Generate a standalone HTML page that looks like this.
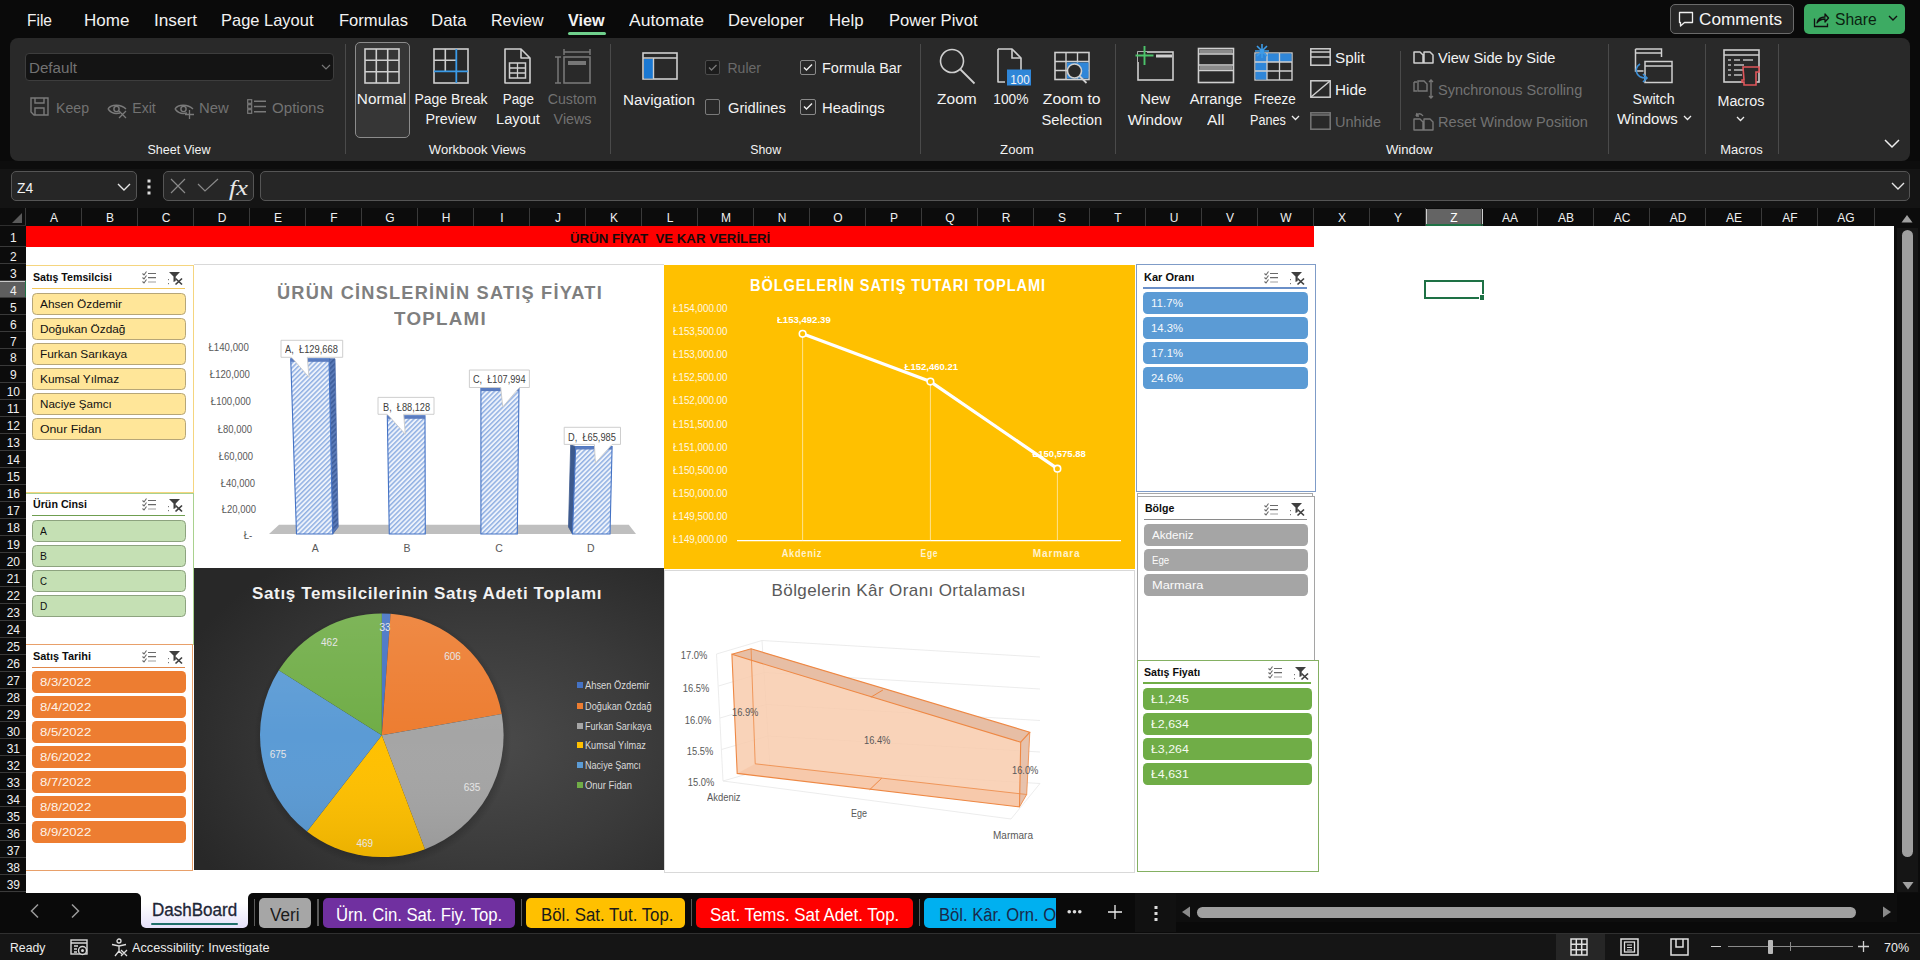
<!DOCTYPE html>
<html><head><meta charset="utf-8"><style>
html,body{margin:0;padding:0;}
body{width:1920px;height:960px;overflow:hidden;background:#0a0a0a;position:relative;font-family:"Liberation Sans", sans-serif;}
.t{position:absolute;white-space:pre;}
.r{position:absolute;}
svg.r{overflow:visible;}
</style></head><body>
<div class="t" style="left:27.00px;top:11.91px;font-size:17px;line-height:17px;color:#f2f2f2;transform:scaleX(0.9126);transform-origin:left;">File</div>
<div class="t" style="left:84.00px;top:11.91px;font-size:17px;line-height:17px;color:#f2f2f2;">Home</div>
<div class="t" style="left:154.00px;top:11.91px;font-size:17px;line-height:17px;color:#f2f2f2;transform:scaleX(1.0113);transform-origin:left;">Insert</div>
<div class="t" style="left:221.00px;top:11.91px;font-size:17px;line-height:17px;color:#f2f2f2;transform:scaleX(0.9689);transform-origin:left;">Page Layout</div>
<div class="t" style="left:338.50px;top:11.91px;font-size:17px;line-height:17px;color:#f2f2f2;transform:scaleX(0.9739);transform-origin:left;">Formulas</div>
<div class="t" style="left:431.00px;top:11.91px;font-size:17px;line-height:17px;color:#f2f2f2;transform:scaleX(0.9886);transform-origin:left;">Data</div>
<div class="t" style="left:491.00px;top:11.91px;font-size:17px;line-height:17px;color:#f2f2f2;transform:scaleX(0.9418);transform-origin:left;">Review</div>
<div class="t" style="left:568.00px;top:11.91px;font-size:17px;line-height:17px;color:#f2f2f2;font-weight:700;transform:scaleX(0.9497);transform-origin:left;">View</div>
<div class="t" style="left:628.50px;top:11.91px;font-size:17px;line-height:17px;color:#f2f2f2;transform:scaleX(1.0307);transform-origin:left;">Automate</div>
<div class="t" style="left:727.50px;top:11.91px;font-size:17px;line-height:17px;color:#f2f2f2;transform:scaleX(0.9807);transform-origin:left;">Developer</div>
<div class="t" style="left:828.50px;top:11.91px;font-size:17px;line-height:17px;color:#f2f2f2;transform:scaleX(0.9867);transform-origin:left;">Help</div>
<div class="t" style="left:888.50px;top:11.91px;font-size:17px;line-height:17px;color:#f2f2f2;transform:scaleX(0.9757);transform-origin:left;">Power Pivot</div>
<div class="r" style="left:568.00px;top:32.00px;width:38.00px;height:3.00px;background:#6fd08c;border-radius:1.5px;"></div>
<div class="r" style="left:1669.50px;top:4.00px;width:124.00px;height:30.00px;background:#262626;border:1px solid #6a6a6a;box-sizing:border-box;border-radius:5px;"></div>
<div class="t" style="left:1699.00px;top:11.41px;font-size:17px;line-height:17px;color:#f5f5f5;transform:scaleX(1.0099);transform-origin:left;">Comments</div>
<svg class="r" style="left:1678px;top:11px;" width="16" height="17" viewBox="0 0 16 17"><path d="M1.5 1.5h13v10h-8l-4 3.5v-3.5h-1z" fill="none" stroke="#eee" stroke-width="1.3" stroke-linejoin="round"/></svg>
<div class="r" style="left:1804.00px;top:4.00px;width:101.00px;height:30.00px;background:#3dab63;border-radius:5px;"></div>
<div class="t" style="left:1834.60px;top:11.41px;font-size:17px;line-height:17px;color:#0a1f10;transform:scaleX(0.9192);transform-origin:left;">Share</div>
<svg class="r" style="left:1813px;top:11px;" width="16" height="17" viewBox="0 0 16 17"><path d="M1.5 7.5v8h13v-3" fill="none" stroke="#111" stroke-width="1.3"/><path d="M4 12c1-4 4-6 8-6v-3l3.5 4-3.5 4v-3c-3 0-6 1-8 4z" fill="none" stroke="#111" stroke-width="1.3" stroke-linejoin="round"/></svg>
<svg class="r" style="left:1888px;top:14px;" width="10" height="8" viewBox="0 0 10 8"><path d="M1 2l4 4 4-4" fill="none" stroke="#111" stroke-width="1.4"/></svg>
<div class="r" style="left:10.00px;top:38.00px;width:1900.00px;height:122.50px;background:#292929;border-radius:8px;"></div>
<div class="r" style="left:344.50px;top:44.00px;width:1.00px;height:110.00px;background:#4a4a4a;"></div>
<div class="r" style="left:610.00px;top:44.00px;width:1.00px;height:110.00px;background:#4a4a4a;"></div>
<div class="r" style="left:920.00px;top:44.00px;width:1.00px;height:110.00px;background:#4a4a4a;"></div>
<div class="r" style="left:1115.00px;top:44.00px;width:1.00px;height:110.00px;background:#4a4a4a;"></div>
<div class="r" style="left:1607.50px;top:44.00px;width:1.00px;height:110.00px;background:#4a4a4a;"></div>
<div class="r" style="left:1704.50px;top:44.00px;width:1.00px;height:110.00px;background:#4a4a4a;"></div>
<div class="r" style="left:1777.50px;top:44.00px;width:1.00px;height:110.00px;background:#4a4a4a;"></div>
<div class="r" style="left:1400.00px;top:51.00px;width:1.00px;height:79.00px;background:#4a4a4a;"></div>
<div class="t" style="left:147.50px;top:143.62px;font-size:12.5px;line-height:12.5px;color:#f3f3f3;">Sheet View</div>
<div class="t" style="left:431.19px;top:143.62px;font-size:12.5px;line-height:12.5px;color:#f3f3f3;transform:scaleX(1.0472);transform-origin:center;">Workbook Views</div>
<div class="t" style="left:750.17px;top:143.62px;font-size:12.5px;line-height:12.5px;color:#f3f3f3;transform:scaleX(0.9850);transform-origin:center;">Show</div>
<div class="t" style="left:1000.63px;top:143.62px;font-size:12.5px;line-height:12.5px;color:#f3f3f3;transform:scaleX(1.0548);transform-origin:center;">Zoom</div>
<div class="t" style="left:1387.47px;top:143.62px;font-size:12.5px;line-height:12.5px;color:#f3f3f3;transform:scaleX(1.0505);transform-origin:center;">Window</div>
<div class="t" style="left:1720.51px;top:143.62px;font-size:12.5px;line-height:12.5px;color:#f3f3f3;transform:scaleX(1.0372);transform-origin:center;">Macros</div>
<div class="r" style="left:25.00px;top:53.00px;width:309.00px;height:28.00px;background:#141414;border:1px solid #3d3d3d;box-sizing:border-box;border-radius:4px;"></div>
<div class="t" style="left:28.60px;top:61.05px;font-size:14px;line-height:14px;color:#727272;transform:scaleX(1.0819);transform-origin:left;">Default</div>
<svg class="r" style="left:321px;top:64px;" width="10" height="6" viewBox="0 0 10 6"><path d="M1 1l4 4 4-4" fill="none" stroke="#777" stroke-width="1.2"/></svg>
<div class="t" style="left:55.50px;top:101.05px;font-size:14px;line-height:14px;color:#727272;transform:scaleX(1.0092);transform-origin:left;">Keep</div>
<div class="t" style="left:132.30px;top:101.05px;font-size:14px;line-height:14px;color:#727272;">Exit</div>
<div class="t" style="left:199.30px;top:101.05px;font-size:14px;line-height:14px;color:#727272;transform:scaleX(1.0603);transform-origin:left;">New</div>
<div class="t" style="left:272.00px;top:101.05px;font-size:14px;line-height:14px;color:#727272;transform:scaleX(1.0776);transform-origin:left;">Options</div>
<svg class="r" style="left:30px;top:97px;" width="19" height="19" viewBox="0 0 19 19"><path d="M1 1h17v17h-14l-3-3z" fill="none" stroke="#7a7a7a" stroke-width="1.4"/><path d="M5 1v5h9v-5M5 18v-7h9v7" fill="none" stroke="#7a7a7a" stroke-width="1.4"/></svg>
<svg class="r" style="left:107px;top:101px;" width="20" height="17" viewBox="0 0 20 17"><path d="M1 8c3-5 13-5 18 0M1 8c3 4 8 5 12 4" fill="none" stroke="#7a7a7a" stroke-width="1.4"/><circle cx="9.5" cy="8" r="2.6" fill="none" stroke="#7a7a7a" stroke-width="1.4"/><path d="M12 10l7 7M19 10l-7 7" stroke="#7a7a7a" stroke-width="1.3"/></svg>
<svg class="r" style="left:174px;top:101px;" width="20" height="17" viewBox="0 0 20 17"><path d="M1 8c3-5 13-5 18 0M1 8c3 4 8 5 12 4" fill="none" stroke="#7a7a7a" stroke-width="1.4"/><circle cx="9.5" cy="8" r="2.6" fill="none" stroke="#7a7a7a" stroke-width="1.4"/><path d="M15.5 9v9M11 13.5h9" stroke="#7a7a7a" stroke-width="1.3"/></svg>
<svg class="r" style="left:246.5px;top:99px;" width="19.5" height="15" viewBox="0 0 19.5 15"><rect x="0.7" y="0.7" width="4" height="3.6" fill="none" stroke="#7a7a7a" stroke-width="1.2"/><rect x="0.7" y="5.7" width="4" height="3.6" fill="none" stroke="#7a7a7a" stroke-width="1.2"/><rect x="0.7" y="10.7" width="4" height="3.6" fill="none" stroke="#7a7a7a" stroke-width="1.2"/><path d="M7 2.2h12M7 7.5h12M7 12.8h12" stroke="#7a7a7a" stroke-width="1.4"/></svg>
<div class="r" style="left:355.00px;top:42.00px;width:55.00px;height:96.00px;background:#363636;border:1px solid #8c8c8c;box-sizing:border-box;border-radius:5px;"></div>
<svg class="r" style="left:364px;top:48px;" width="36" height="36" viewBox="0 0 36 36"><rect x="1" y="1" width="34" height="34" fill="none" stroke="#cfcfcf" stroke-width="1.6"/><path d="M12.3 1v34M23.7 1v34M1 12.3h34M1 23.7h34" stroke="#cfcfcf" stroke-width="1.6"/></svg>
<svg class="r" style="left:433px;top:48px;" width="36" height="36" viewBox="0 0 36 36"><rect x="1" y="1" width="34" height="34" fill="none" stroke="#cfcfcf" stroke-width="1.6"/><path d="M12.3 1v22.7M1 12.3h22.7" stroke="#cfcfcf" stroke-width="1.6"/><path d="M23.3 1v34M1 23.3h34" stroke="#3b9be8" stroke-width="1.8"/></svg>
<svg class="r" style="left:504px;top:48px;" width="27" height="36" viewBox="0 0 27 36"><path d="M1 1h16l9 9v25h-25z M17 1v9h9" fill="none" stroke="#cfcfcf" stroke-width="1.6" stroke-linejoin="round"/><rect x="5.5" y="15" width="16" height="15" fill="none" stroke="#cfcfcf" stroke-width="1.5"/><path d="M13.5 15v15M5.5 20h16M5.5 25h16" stroke="#cfcfcf" stroke-width="1.3"/></svg>
<svg class="r" style="left:554px;top:47px;" width="38" height="37" viewBox="0 0 38 37"><path d="M10 2v6M36 2v6M10 5h26" stroke="#777" stroke-width="1.5"/><rect x="10" y="10" width="26" height="26" fill="none" stroke="#777" stroke-width="1.6"/><rect x="14" y="14" width="18" height="4" fill="#777"/><path d="M1 10h6M1 36h6M4 10v26" stroke="#777" stroke-width="1.5"/></svg>
<div class="t" style="left:359.14px;top:91.95px;font-size:14px;line-height:14px;color:#f3f3f3;transform:scaleX(1.0948);transform-origin:center;">Normal</div>
<div class="t" style="left:414.42px;top:91.95px;font-size:14px;line-height:14px;color:#f3f3f3;">Page Break</div>
<div class="t" style="left:425.70px;top:111.95px;font-size:14px;line-height:14px;color:#f3f3f3;transform:scaleX(1.0201);transform-origin:center;">Preview</div>
<div class="t" style="left:501.65px;top:91.95px;font-size:14px;line-height:14px;color:#f3f3f3;transform:scaleX(0.9572);transform-origin:center;">Page</div>
<div class="t" style="left:496.98px;top:111.95px;font-size:14px;line-height:14px;color:#f3f3f3;transform:scaleX(1.0419);transform-origin:center;">Layout</div>
<div class="t" style="left:548.48px;top:91.95px;font-size:14px;line-height:14px;color:#727272;transform:scaleX(1.0096);transform-origin:center;">Custom</div>
<div class="t" style="left:554.45px;top:111.95px;font-size:14px;line-height:14px;color:#727272;transform:scaleX(1.0217);transform-origin:center;">Views</div>
<svg class="r" style="left:642px;top:52px;" width="36" height="28" viewBox="0 0 36 28"><rect x="1" y="1" width="34" height="26" fill="none" stroke="#cfcfcf" stroke-width="1.6"/><path d="M1 6h34" stroke="#cfcfcf" stroke-width="1.6"/><rect x="2" y="7" width="9" height="19.5" fill="#1a78d2"/><path d="M11.5 6v21" stroke="#cfcfcf" stroke-width="1.4"/></svg>
<div class="t" style="left:625.92px;top:92.55px;font-size:14px;line-height:14px;color:#f3f3f3;transform:scaleX(1.0883);transform-origin:center;">Navigation</div>
<div class="r" style="left:705.00px;top:59.50px;width:15.00px;height:15.00px;background:#1c1c1c;border:1px solid #4a4a4a;box-sizing:border-box;border-radius:2px;"></div>
<svg class="r" style="left:705px;top:59.5px;" width="15" height="15.0" viewBox="0 0 15 15.0"><path d="M4 7.5l2.5 2.5 5-5" fill="none" stroke="#777" stroke-width="1.3"/></svg>
<div class="r" style="left:705.00px;top:99.00px;width:15.00px;height:15.50px;border:1px solid #7a7a7a;box-sizing:border-box;border-radius:2px;"></div>
<div class="r" style="left:800.00px;top:59.50px;width:16.00px;height:15.00px;border:1px solid #8a8a8a;box-sizing:border-box;border-radius:2px;"></div>
<svg class="r" style="left:800px;top:59.5px;" width="16" height="15.0" viewBox="0 0 16 15.0"><path d="M4 7.5l2.5 2.5 5.5-5.5" fill="none" stroke="#eee" stroke-width="1.4"/></svg>
<div class="r" style="left:800.00px;top:99.00px;width:16.00px;height:15.50px;border:1px solid #8a8a8a;box-sizing:border-box;border-radius:2px;"></div>
<svg class="r" style="left:800px;top:99px;" width="16" height="15.5" viewBox="0 0 16 15.5"><path d="M4 7.5l2.5 2.5 5.5-5.5" fill="none" stroke="#eee" stroke-width="1.4"/></svg>
<div class="t" style="left:727.50px;top:61.05px;font-size:14px;line-height:14px;color:#6a6a6a;">Ruler</div>
<div class="t" style="left:727.50px;top:101.05px;font-size:14px;line-height:14px;color:#f3f3f3;transform:scaleX(1.0462);transform-origin:left;">Gridlines</div>
<div class="t" style="left:822.00px;top:61.05px;font-size:14px;line-height:14px;color:#f3f3f3;transform:scaleX(1.0347);transform-origin:left;">Formula Bar</div>
<div class="t" style="left:822.00px;top:101.05px;font-size:14px;line-height:14px;color:#f3f3f3;transform:scaleX(1.0599);transform-origin:left;">Headings</div>
<svg class="r" style="left:938px;top:47px;" width="39" height="39" viewBox="0 0 39 39"><circle cx="14" cy="14" r="11.5" fill="none" stroke="#cfcfcf" stroke-width="1.6"/><path d="M22.5 22.5l14 14" stroke="#cfcfcf" stroke-width="1.8"/></svg>
<svg class="r" style="left:997px;top:48px;" width="35" height="38" viewBox="0 0 35 38"><path d="M1 1h14l9 9v14 M1 1v33h7" fill="none" stroke="#cfcfcf" stroke-width="1.6" stroke-linejoin="round"/><path d="M15 1v9h9" fill="none" stroke="#cfcfcf" stroke-width="1.6"/><rect x="10" y="21.5" width="24" height="16" fill="#2f86d8"/></svg>
<div class="t" style="left:1010.49px;top:73.74px;font-size:12px;line-height:12px;color:#f4f4f4;transform:scaleX(0.9740);transform-origin:center;">100</div>
<svg class="r" style="left:1054px;top:51px;" width="40" height="36" viewBox="0 0 40 36"><rect x="1" y="1.5" width="34" height="27" fill="none" stroke="#cfcfcf" stroke-width="1.6"/><path d="M12 1.5v27M23.5 1.5v27M1 10.5h34M1 19.5h34" stroke="#cfcfcf" stroke-width="1.4"/><rect x="13" y="11.5" width="21.5" height="16" fill="#2f86d8"/><circle cx="20.5" cy="20" r="7" fill="#2a2a2a" stroke="#cfcfcf" stroke-width="1.6"/><path d="M25.5 25l7 7" stroke="#cfcfcf" stroke-width="1.8"/></svg>
<div class="t" style="left:938.71px;top:92.35px;font-size:14px;line-height:14px;color:#f3f3f3;transform:scaleX(1.1065);transform-origin:center;">Zoom</div>
<div class="t" style="left:993.39px;top:92.35px;font-size:14px;line-height:14px;color:#f3f3f3;transform:scaleX(0.9830);transform-origin:center;">100%</div>
<div class="t" style="left:1046.02px;top:92.35px;font-size:14px;line-height:14px;color:#f3f3f3;transform:scaleX(1.1254);transform-origin:center;">Zoom to</div>
<div class="t" style="left:1042.70px;top:112.55px;font-size:14px;line-height:14px;color:#f3f3f3;transform:scaleX(1.0521);transform-origin:center;">Selection</div>
<svg class="r" style="left:1135px;top:45px;" width="39" height="36" viewBox="0 0 39 36"><rect x="3" y="7" width="35" height="28" fill="none" stroke="#cfcfcf" stroke-width="1.6"/><rect x="3" y="7" width="9" height="10" fill="#292929"/><path d="M21 11h16" stroke="#cfcfcf" stroke-width="3"/><path d="M9.5 1v19M0.5 10.5h18" stroke="#4cc36a" stroke-width="1.9"/></svg>
<svg class="r" style="left:1197px;top:47px;" width="38" height="37" viewBox="0 0 38 37"><rect x="1.5" y="1.5" width="35" height="34" fill="none" stroke="#cfcfcf" stroke-width="1.6"/><rect x="2.5" y="2.5" width="33" height="4" fill="#8a8a8a"/><path d="M1.5 7h35M1.5 18h35M1.5 23.5h35" stroke="#cfcfcf" stroke-width="1.6"/><rect x="2.5" y="19" width="33" height="4" fill="#8a8a8a"/></svg>
<svg class="r" style="left:1254px;top:44px;" width="40" height="37" viewBox="0 0 40 37"><rect x="1" y="9" width="37" height="27" fill="none" stroke="#cfcfcf" stroke-width="1.4"/><rect x="1.5" y="9.5" width="36" height="8.5" fill="#2f86d8"/><rect x="1.5" y="18" width="11.5" height="17.5" fill="#2f86d8"/><path d="M13 9v27M25.5 9v27M1 18h37M1 27h37" stroke="#cfcfcf" stroke-width="1.3"/><g stroke="#3b9be8" stroke-width="1.6"><path d="M8 0v14M1 7h14M3 2l10 10M13 2l-10 10"/></g></svg>
<div class="t" style="left:1141.00px;top:92.35px;font-size:14px;line-height:14px;color:#f3f3f3;transform:scaleX(1.0603);transform-origin:center;">New</div>
<div class="t" style="left:1129.70px;top:112.55px;font-size:14px;line-height:14px;color:#f3f3f3;transform:scaleX(1.0904);transform-origin:center;">Window</div>
<div class="t" style="left:1190.59px;top:92.35px;font-size:14px;line-height:14px;color:#f3f3f3;transform:scaleX(1.0540);transform-origin:center;">Arrange</div>
<div class="t" style="left:1208.02px;top:112.55px;font-size:14px;line-height:14px;color:#f3f3f3;transform:scaleX(1.1182);transform-origin:center;">All</div>
<div class="t" style="left:1252.81px;top:92.35px;font-size:14px;line-height:14px;color:#f3f3f3;transform:scaleX(0.9615);transform-origin:center;">Freeze</div>
<div class="t" style="left:1249.60px;top:112.55px;font-size:14px;line-height:14px;color:#f3f3f3;transform:scaleX(0.9018);transform-origin:left;">Panes</div>
<svg class="r" style="left:1290.5px;top:115px;" width="9.0" height="6" viewBox="0 0 9.0 6"><path d="M1 1l3.5 3.5 3.5-3.5" fill="none" stroke="#eee" stroke-width="1.3"/></svg>
<svg class="r" style="left:1310px;top:48px;" width="21" height="18" viewBox="0 0 21 18"><rect x="0.8" y="0.8" width="19.4" height="16.4" fill="none" stroke="#cfcfcf" stroke-width="1.5"/><path d="M1 4h19M1 9h19" stroke="#cfcfcf" stroke-width="1.5"/></svg>
<svg class="r" style="left:1310px;top:80px;" width="21" height="18" viewBox="0 0 21 18"><rect x="0.8" y="0.8" width="19.4" height="16.4" fill="none" stroke="#cfcfcf" stroke-width="1.5"/><path d="M1 17L20 1" stroke="#cfcfcf" stroke-width="1.5"/></svg>
<svg class="r" style="left:1310px;top:112px;" width="21" height="18" viewBox="0 0 21 18"><rect x="0.8" y="0.8" width="19.4" height="16.4" fill="none" stroke="#777" stroke-width="1.5"/><path d="M1 3h19" stroke="#777" stroke-width="1.5"/></svg>
<div class="t" style="left:1335.30px;top:51.05px;font-size:14px;line-height:14px;color:#f3f3f3;transform:scaleX(1.0904);transform-origin:left;">Split</div>
<div class="t" style="left:1335.30px;top:83.25px;font-size:14px;line-height:14px;color:#f3f3f3;transform:scaleX(1.0904);transform-origin:left;">Hide</div>
<div class="t" style="left:1335.30px;top:115.25px;font-size:14px;line-height:14px;color:#727272;transform:scaleX(1.0367);transform-origin:left;">Unhide</div>
<svg class="r" style="left:1413px;top:51px;" width="21" height="13" viewBox="0 0 21 13"><path d="M1 1h6l3 3v8h-9z M11 1h6l3 3v8h-9z" fill="none" stroke="#cfcfcf" stroke-width="1.5" stroke-linejoin="round"/></svg>
<svg class="r" style="left:1413px;top:78px;" width="21" height="22" viewBox="0 0 21 22"><path d="M1 4h3M1 4v9h3 M5 3h6l3 3v7h-9z" fill="none" stroke="#777" stroke-width="1.4"/><path d="M18 2v18M16 4l2-2 2 2M16 18l2 2 2-2" fill="none" stroke="#777" stroke-width="1.4"/></svg>
<svg class="r" style="left:1413px;top:111px;" width="21" height="20" viewBox="0 0 21 20"><path d="M1 8h6l3 3v8h-9z M11 8h6l3 3v8h-9z" fill="none" stroke="#777" stroke-width="1.4" stroke-linejoin="round"/><path d="M10 5c-2-3-5-3-7 0M3 5l1-3M3 5l3 0" fill="none" stroke="#777" stroke-width="1.3"/></svg>
<div class="t" style="left:1438.30px;top:51.05px;font-size:14px;line-height:14px;color:#f3f3f3;transform:scaleX(1.0435);transform-origin:left;">View Side by Side</div>
<div class="t" style="left:1438.30px;top:83.25px;font-size:14px;line-height:14px;color:#727272;transform:scaleX(1.0351);transform-origin:left;">Synchronous Scrolling</div>
<div class="t" style="left:1438.30px;top:115.25px;font-size:14px;line-height:14px;color:#727272;transform:scaleX(1.0419);transform-origin:left;">Reset Window Position</div>
<svg class="r" style="left:1634px;top:47px;" width="40" height="39" viewBox="0 0 40 39"><path d="M1.5 2h26v8M1.5 2v22h8M1.5 6h26" fill="none" stroke="#cfcfcf" stroke-width="1.5"/><rect x="11" y="14.5" width="27" height="21" fill="#292929" stroke="#cfcfcf" stroke-width="1.5"/><path d="M11 19h27" stroke="#cfcfcf" stroke-width="1.5"/><path d="M6 17c-6 4-5 14 6 14M9 27l4 4-4 4" fill="none" stroke="#3d8fd6" stroke-width="1.6"/></svg>
<div class="t" style="left:1633.38px;top:92.15px;font-size:14px;line-height:14px;color:#f3f3f3;transform:scaleX(1.0185);transform-origin:center;">Switch</div>
<div class="t" style="left:1617.20px;top:111.55px;font-size:14px;line-height:14px;color:#f3f3f3;transform:scaleX(1.0687);transform-origin:left;">Windows</div>
<svg class="r" style="left:1683px;top:115px;" width="9" height="6" viewBox="0 0 9 6"><path d="M1 1l3.5 3.5 3.5-3.5" fill="none" stroke="#eee" stroke-width="1.3"/></svg>
<svg class="r" style="left:1723px;top:49px;" width="40" height="38" viewBox="0 0 40 38"><rect x="1" y="1" width="35" height="32" fill="none" stroke="#cfcfcf" stroke-width="1.6"/><path d="M1 6h35" stroke="#cfcfcf" stroke-width="1.6"/><path d="M5 11h3M11 11h6M20 11h10M5 16h3M11 16h10M5 21h3M11 21h9M5 26h3M11 26h8" stroke="#bdbdbd" stroke-width="1.5"/><path d="M20 18h16v5h-3v13h-12v-3h-2v-2h2z" fill="#292929" stroke="#e0555a" stroke-width="1.6"/></svg>
<div class="t" style="left:1718.05px;top:93.95px;font-size:14px;line-height:14px;color:#f3f3f3;transform:scaleX(1.0218);transform-origin:center;">Macros</div>
<svg class="r" style="left:1736px;top:116px;" width="9" height="6" viewBox="0 0 9 6"><path d="M1 1l3.5 3.5 3.5-3.5" fill="none" stroke="#eee" stroke-width="1.3"/></svg>
<svg class="r" style="left:1884px;top:139px;" width="16" height="9" viewBox="0 0 16 9"><path d="M1 1l7 7 7-7" fill="none" stroke="#eee" stroke-width="1.5"/></svg>
<div class="r" style="left:0.00px;top:161.00px;width:1920.00px;height:8.00px;background:#0d0d0d;"></div>
<div class="r" style="left:0.00px;top:169.00px;width:1920.00px;height:39.00px;background:#141414;"></div>
<div class="r" style="left:10.50px;top:171.00px;width:126.50px;height:30.00px;background:#262626;border:1px solid #555555;box-sizing:border-box;border-radius:5px;"></div>
<div class="t" style="left:16.90px;top:179.50px;font-size:15px;line-height:15px;color:#f2f2f2;transform:scaleX(0.9255);transform-origin:left;">Z4</div>
<svg class="r" style="left:117px;top:183px;" width="14" height="8" viewBox="0 0 14 8"><path d="M1 1l6 6 6-6" fill="none" stroke="#e6e6e6" stroke-width="1.4"/></svg>
<svg class="r" style="left:147px;top:179px;" width="5" height="16" viewBox="0 0 5 16"><rect x="0.5" y="0.5" width="3" height="3" fill="#ddd"/><rect x="0.5" y="6.5" width="3" height="3" fill="#ddd"/><rect x="0.5" y="12.5" width="3" height="3" fill="#ddd"/></svg>
<div class="r" style="left:162.50px;top:171.00px;width:91.00px;height:30.00px;background:#262626;border:1px solid #555555;box-sizing:border-box;border-radius:5px;"></div>
<svg class="r" style="left:170px;top:178px;" width="16" height="16" viewBox="0 0 16 16"><path d="M1 1l14 14M15 1l-14 14" stroke="#8a8a8a" stroke-width="1.2"/></svg>
<svg class="r" style="left:197px;top:178px;" width="22" height="14" viewBox="0 0 22 14"><path d="M1 6l7 7 13-12" fill="none" stroke="#8a8a8a" stroke-width="1.2"/></svg>
<div class="t" style="left:228.50px;top:177.75px;font-size:20px;line-height:20px;color:#e8e8e8;font-family:'Liberation Serif', serif;transform:scaleX(1.3164);transform-origin:left;font-style:italic;">fx</div>
<div class="r" style="left:259.50px;top:171.00px;width:1650.50px;height:30.00px;background:#262626;border:1px solid #555555;box-sizing:border-box;border-radius:5px;"></div>
<svg class="r" style="left:1891px;top:182px;" width="14" height="8" viewBox="0 0 14 8"><path d="M1 1l6 6 6-6" fill="none" stroke="#e6e6e6" stroke-width="1.4"/></svg>
<div class="r" style="left:0.00px;top:208.00px;width:1920.00px;height:18.00px;background:#0c0c0c;"></div>
<svg class="r" style="left:12px;top:212px;" width="11" height="11" viewBox="0 0 11 11"><path d="M10 1v10h-10z" fill="#5a5a5a"/></svg>
<div class="r" style="left:25.00px;top:208.00px;width:1.00px;height:18.00px;background:#3a3a3a;"></div>
<div class="t" style="left:50.00px;top:211.84px;font-size:12px;line-height:12px;color:#f0f0f0;">A</div>
<div class="r" style="left:81.00px;top:208.00px;width:1.00px;height:18.00px;background:#3a3a3a;"></div>
<div class="t" style="left:106.00px;top:211.84px;font-size:12px;line-height:12px;color:#f0f0f0;">B</div>
<div class="r" style="left:137.00px;top:208.00px;width:1.00px;height:18.00px;background:#3a3a3a;"></div>
<div class="t" style="left:161.67px;top:211.84px;font-size:12px;line-height:12px;color:#f0f0f0;">C</div>
<div class="r" style="left:193.00px;top:208.00px;width:1.00px;height:18.00px;background:#3a3a3a;"></div>
<div class="t" style="left:217.67px;top:211.84px;font-size:12px;line-height:12px;color:#f0f0f0;">D</div>
<div class="r" style="left:249.00px;top:208.00px;width:1.00px;height:18.00px;background:#3a3a3a;"></div>
<div class="t" style="left:274.00px;top:211.84px;font-size:12px;line-height:12px;color:#f0f0f0;">E</div>
<div class="r" style="left:305.00px;top:208.00px;width:1.00px;height:18.00px;background:#3a3a3a;"></div>
<div class="t" style="left:330.33px;top:211.84px;font-size:12px;line-height:12px;color:#f0f0f0;">F</div>
<div class="r" style="left:361.00px;top:208.00px;width:1.00px;height:18.00px;background:#3a3a3a;"></div>
<div class="t" style="left:385.33px;top:211.84px;font-size:12px;line-height:12px;color:#f0f0f0;">G</div>
<div class="r" style="left:417.00px;top:208.00px;width:1.00px;height:18.00px;background:#3a3a3a;"></div>
<div class="t" style="left:441.67px;top:211.84px;font-size:12px;line-height:12px;color:#f0f0f0;">H</div>
<div class="r" style="left:473.00px;top:208.00px;width:1.00px;height:18.00px;background:#3a3a3a;"></div>
<div class="t" style="left:500.33px;top:211.84px;font-size:12px;line-height:12px;color:#f0f0f0;">I</div>
<div class="r" style="left:529.00px;top:208.00px;width:1.00px;height:18.00px;background:#3a3a3a;"></div>
<div class="t" style="left:555.00px;top:211.84px;font-size:12px;line-height:12px;color:#f0f0f0;">J</div>
<div class="r" style="left:585.00px;top:208.00px;width:1.00px;height:18.00px;background:#3a3a3a;"></div>
<div class="t" style="left:610.00px;top:211.84px;font-size:12px;line-height:12px;color:#f0f0f0;">K</div>
<div class="r" style="left:641.00px;top:208.00px;width:1.00px;height:18.00px;background:#3a3a3a;"></div>
<div class="t" style="left:666.66px;top:211.84px;font-size:12px;line-height:12px;color:#f0f0f0;">L</div>
<div class="r" style="left:697.00px;top:208.00px;width:1.00px;height:18.00px;background:#3a3a3a;"></div>
<div class="t" style="left:721.00px;top:211.84px;font-size:12px;line-height:12px;color:#f0f0f0;">M</div>
<div class="r" style="left:753.00px;top:208.00px;width:1.00px;height:18.00px;background:#3a3a3a;"></div>
<div class="t" style="left:777.67px;top:211.84px;font-size:12px;line-height:12px;color:#f0f0f0;">N</div>
<div class="r" style="left:809.00px;top:208.00px;width:1.00px;height:18.00px;background:#3a3a3a;"></div>
<div class="t" style="left:833.33px;top:211.84px;font-size:12px;line-height:12px;color:#f0f0f0;">O</div>
<div class="r" style="left:865.00px;top:208.00px;width:1.00px;height:18.00px;background:#3a3a3a;"></div>
<div class="t" style="left:890.00px;top:211.84px;font-size:12px;line-height:12px;color:#f0f0f0;">P</div>
<div class="r" style="left:921.00px;top:208.00px;width:1.00px;height:18.00px;background:#3a3a3a;"></div>
<div class="t" style="left:945.33px;top:211.84px;font-size:12px;line-height:12px;color:#f0f0f0;">Q</div>
<div class="r" style="left:977.00px;top:208.00px;width:1.00px;height:18.00px;background:#3a3a3a;"></div>
<div class="t" style="left:1001.67px;top:211.84px;font-size:12px;line-height:12px;color:#f0f0f0;">R</div>
<div class="r" style="left:1033.00px;top:208.00px;width:1.00px;height:18.00px;background:#3a3a3a;"></div>
<div class="t" style="left:1058.00px;top:211.84px;font-size:12px;line-height:12px;color:#f0f0f0;">S</div>
<div class="r" style="left:1089.00px;top:208.00px;width:1.00px;height:18.00px;background:#3a3a3a;"></div>
<div class="t" style="left:1114.33px;top:211.84px;font-size:12px;line-height:12px;color:#f0f0f0;">T</div>
<div class="r" style="left:1145.00px;top:208.00px;width:1.00px;height:18.00px;background:#3a3a3a;"></div>
<div class="t" style="left:1169.67px;top:211.84px;font-size:12px;line-height:12px;color:#f0f0f0;">U</div>
<div class="r" style="left:1201.00px;top:208.00px;width:1.00px;height:18.00px;background:#3a3a3a;"></div>
<div class="t" style="left:1226.00px;top:211.84px;font-size:12px;line-height:12px;color:#f0f0f0;">V</div>
<div class="r" style="left:1257.00px;top:208.00px;width:1.00px;height:18.00px;background:#3a3a3a;"></div>
<div class="t" style="left:1280.34px;top:211.84px;font-size:12px;line-height:12px;color:#f0f0f0;">W</div>
<div class="r" style="left:1313.00px;top:208.00px;width:1.00px;height:18.00px;background:#3a3a3a;"></div>
<div class="t" style="left:1338.00px;top:211.84px;font-size:12px;line-height:12px;color:#f0f0f0;">X</div>
<div class="r" style="left:1369.00px;top:208.00px;width:1.00px;height:18.00px;background:#3a3a3a;"></div>
<div class="t" style="left:1394.00px;top:211.84px;font-size:12px;line-height:12px;color:#f0f0f0;">Y</div>
<div class="r" style="left:1425.00px;top:208.00px;width:1.00px;height:18.00px;background:#3a3a3a;"></div>
<div class="r" style="left:1425.50px;top:209.00px;width:57.00px;height:17.00px;background:#646464;border-left:1px solid #cfcfcf;border-right:1px solid #cfcfcf;box-sizing:border-box;"></div>
<div class="r" style="left:1425.50px;top:224.00px;width:57.00px;height:2.00px;background:#1f7246;"></div>
<div class="t" style="left:1450.33px;top:211.84px;font-size:12px;line-height:12px;color:#ffffff;">Z</div>
<div class="r" style="left:1481.00px;top:208.00px;width:1.00px;height:18.00px;background:#3a3a3a;"></div>
<div class="t" style="left:1502.00px;top:211.84px;font-size:12px;line-height:12px;color:#f0f0f0;">AA</div>
<div class="r" style="left:1537.00px;top:208.00px;width:1.00px;height:18.00px;background:#3a3a3a;"></div>
<div class="t" style="left:1558.00px;top:211.84px;font-size:12px;line-height:12px;color:#f0f0f0;">AB</div>
<div class="r" style="left:1593.00px;top:208.00px;width:1.00px;height:18.00px;background:#3a3a3a;"></div>
<div class="t" style="left:1613.67px;top:211.84px;font-size:12px;line-height:12px;color:#f0f0f0;">AC</div>
<div class="r" style="left:1649.00px;top:208.00px;width:1.00px;height:18.00px;background:#3a3a3a;"></div>
<div class="t" style="left:1669.67px;top:211.84px;font-size:12px;line-height:12px;color:#f0f0f0;">AD</div>
<div class="r" style="left:1705.00px;top:208.00px;width:1.00px;height:18.00px;background:#3a3a3a;"></div>
<div class="t" style="left:1726.00px;top:211.84px;font-size:12px;line-height:12px;color:#f0f0f0;">AE</div>
<div class="r" style="left:1761.00px;top:208.00px;width:1.00px;height:18.00px;background:#3a3a3a;"></div>
<div class="t" style="left:1782.33px;top:211.84px;font-size:12px;line-height:12px;color:#f0f0f0;">AF</div>
<div class="r" style="left:1817.00px;top:208.00px;width:1.00px;height:18.00px;background:#3a3a3a;"></div>
<div class="t" style="left:1837.33px;top:211.84px;font-size:12px;line-height:12px;color:#f0f0f0;">AG</div>
<div class="r" style="left:1873.50px;top:208.00px;width:1.00px;height:18.00px;background:#3a3a3a;"></div>
<div class="r" style="left:0.00px;top:225.00px;width:26.00px;height:1.00px;background:#2e2e2e;"></div>
<div class="r" style="left:0.00px;top:226.00px;width:26.00px;height:667.00px;background:#0c0c0c;"></div>
<div class="r" style="left:0.00px;top:246.30px;width:26.00px;height:1.00px;background:#3a3a3a;"></div>
<div class="t" style="left:9.96px;top:232.49px;font-size:12px;line-height:12px;color:#f0f0f0;">1</div>
<div class="r" style="left:0.00px;top:263.30px;width:26.00px;height:1.00px;background:#3a3a3a;"></div>
<div class="t" style="left:9.96px;top:250.64px;font-size:12px;line-height:12px;color:#f0f0f0;">2</div>
<div class="r" style="left:0.00px;top:280.27px;width:26.00px;height:1.00px;background:#3a3a3a;"></div>
<div class="t" style="left:9.96px;top:267.62px;font-size:12px;line-height:12px;color:#f0f0f0;">3</div>
<div class="r" style="left:0.00px;top:280.77px;width:26.00px;height:16.97px;background:#5e5e5e;border-top:1px solid #c8c8c8;border-bottom:1px solid #c8c8c8;box-sizing:border-box;"></div>
<div class="r" style="left:24.50px;top:280.77px;width:1.50px;height:16.97px;background:#1f7246;"></div>
<div class="r" style="left:0.00px;top:297.24px;width:26.00px;height:1.00px;background:#3a3a3a;"></div>
<div class="t" style="left:9.96px;top:284.59px;font-size:12px;line-height:12px;color:#f0f0f0;">4</div>
<div class="r" style="left:0.00px;top:314.21px;width:26.00px;height:1.00px;background:#3a3a3a;"></div>
<div class="t" style="left:9.96px;top:301.56px;font-size:12px;line-height:12px;color:#f0f0f0;">5</div>
<div class="r" style="left:0.00px;top:331.18px;width:26.00px;height:1.00px;background:#3a3a3a;"></div>
<div class="t" style="left:9.96px;top:318.53px;font-size:12px;line-height:12px;color:#f0f0f0;">6</div>
<div class="r" style="left:0.00px;top:348.15px;width:26.00px;height:1.00px;background:#3a3a3a;"></div>
<div class="t" style="left:9.96px;top:335.50px;font-size:12px;line-height:12px;color:#f0f0f0;">7</div>
<div class="r" style="left:0.00px;top:365.12px;width:26.00px;height:1.00px;background:#3a3a3a;"></div>
<div class="t" style="left:9.96px;top:352.47px;font-size:12px;line-height:12px;color:#f0f0f0;">8</div>
<div class="r" style="left:0.00px;top:382.09px;width:26.00px;height:1.00px;background:#3a3a3a;"></div>
<div class="t" style="left:9.96px;top:369.44px;font-size:12px;line-height:12px;color:#f0f0f0;">9</div>
<div class="r" style="left:0.00px;top:399.06px;width:26.00px;height:1.00px;background:#3a3a3a;"></div>
<div class="t" style="left:6.63px;top:386.41px;font-size:12px;line-height:12px;color:#f0f0f0;">10</div>
<div class="r" style="left:0.00px;top:416.03px;width:26.00px;height:1.00px;background:#3a3a3a;"></div>
<div class="t" style="left:7.07px;top:403.38px;font-size:12px;line-height:12px;color:#f0f0f0;">11</div>
<div class="r" style="left:0.00px;top:433.00px;width:26.00px;height:1.00px;background:#3a3a3a;"></div>
<div class="t" style="left:6.63px;top:420.35px;font-size:12px;line-height:12px;color:#f0f0f0;">12</div>
<div class="r" style="left:0.00px;top:449.97px;width:26.00px;height:1.00px;background:#3a3a3a;"></div>
<div class="t" style="left:6.63px;top:437.32px;font-size:12px;line-height:12px;color:#f0f0f0;">13</div>
<div class="r" style="left:0.00px;top:466.94px;width:26.00px;height:1.00px;background:#3a3a3a;"></div>
<div class="t" style="left:6.63px;top:454.29px;font-size:12px;line-height:12px;color:#f0f0f0;">14</div>
<div class="r" style="left:0.00px;top:483.91px;width:26.00px;height:1.00px;background:#3a3a3a;"></div>
<div class="t" style="left:6.63px;top:471.26px;font-size:12px;line-height:12px;color:#f0f0f0;">15</div>
<div class="r" style="left:0.00px;top:500.88px;width:26.00px;height:1.00px;background:#3a3a3a;"></div>
<div class="t" style="left:6.63px;top:488.23px;font-size:12px;line-height:12px;color:#f0f0f0;">16</div>
<div class="r" style="left:0.00px;top:517.85px;width:26.00px;height:1.00px;background:#3a3a3a;"></div>
<div class="t" style="left:6.63px;top:505.20px;font-size:12px;line-height:12px;color:#f0f0f0;">17</div>
<div class="r" style="left:0.00px;top:534.82px;width:26.00px;height:1.00px;background:#3a3a3a;"></div>
<div class="t" style="left:6.63px;top:522.17px;font-size:12px;line-height:12px;color:#f0f0f0;">18</div>
<div class="r" style="left:0.00px;top:551.79px;width:26.00px;height:1.00px;background:#3a3a3a;"></div>
<div class="t" style="left:6.63px;top:539.14px;font-size:12px;line-height:12px;color:#f0f0f0;">19</div>
<div class="r" style="left:0.00px;top:568.76px;width:26.00px;height:1.00px;background:#3a3a3a;"></div>
<div class="t" style="left:6.63px;top:556.11px;font-size:12px;line-height:12px;color:#f0f0f0;">20</div>
<div class="r" style="left:0.00px;top:585.73px;width:26.00px;height:1.00px;background:#3a3a3a;"></div>
<div class="t" style="left:6.63px;top:573.08px;font-size:12px;line-height:12px;color:#f0f0f0;">21</div>
<div class="r" style="left:0.00px;top:602.70px;width:26.00px;height:1.00px;background:#3a3a3a;"></div>
<div class="t" style="left:6.63px;top:590.05px;font-size:12px;line-height:12px;color:#f0f0f0;">22</div>
<div class="r" style="left:0.00px;top:619.67px;width:26.00px;height:1.00px;background:#3a3a3a;"></div>
<div class="t" style="left:6.63px;top:607.02px;font-size:12px;line-height:12px;color:#f0f0f0;">23</div>
<div class="r" style="left:0.00px;top:636.64px;width:26.00px;height:1.00px;background:#3a3a3a;"></div>
<div class="t" style="left:6.63px;top:623.99px;font-size:12px;line-height:12px;color:#f0f0f0;">24</div>
<div class="r" style="left:0.00px;top:653.61px;width:26.00px;height:1.00px;background:#3a3a3a;"></div>
<div class="t" style="left:6.63px;top:640.96px;font-size:12px;line-height:12px;color:#f0f0f0;">25</div>
<div class="r" style="left:0.00px;top:670.58px;width:26.00px;height:1.00px;background:#3a3a3a;"></div>
<div class="t" style="left:6.63px;top:657.93px;font-size:12px;line-height:12px;color:#f0f0f0;">26</div>
<div class="r" style="left:0.00px;top:687.55px;width:26.00px;height:1.00px;background:#3a3a3a;"></div>
<div class="t" style="left:6.63px;top:674.90px;font-size:12px;line-height:12px;color:#f0f0f0;">27</div>
<div class="r" style="left:0.00px;top:704.52px;width:26.00px;height:1.00px;background:#3a3a3a;"></div>
<div class="t" style="left:6.63px;top:691.87px;font-size:12px;line-height:12px;color:#f0f0f0;">28</div>
<div class="r" style="left:0.00px;top:721.49px;width:26.00px;height:1.00px;background:#3a3a3a;"></div>
<div class="t" style="left:6.63px;top:708.84px;font-size:12px;line-height:12px;color:#f0f0f0;">29</div>
<div class="r" style="left:0.00px;top:738.46px;width:26.00px;height:1.00px;background:#3a3a3a;"></div>
<div class="t" style="left:6.63px;top:725.81px;font-size:12px;line-height:12px;color:#f0f0f0;">30</div>
<div class="r" style="left:0.00px;top:755.43px;width:26.00px;height:1.00px;background:#3a3a3a;"></div>
<div class="t" style="left:6.63px;top:742.78px;font-size:12px;line-height:12px;color:#f0f0f0;">31</div>
<div class="r" style="left:0.00px;top:772.40px;width:26.00px;height:1.00px;background:#3a3a3a;"></div>
<div class="t" style="left:6.63px;top:759.75px;font-size:12px;line-height:12px;color:#f0f0f0;">32</div>
<div class="r" style="left:0.00px;top:789.37px;width:26.00px;height:1.00px;background:#3a3a3a;"></div>
<div class="t" style="left:6.63px;top:776.72px;font-size:12px;line-height:12px;color:#f0f0f0;">33</div>
<div class="r" style="left:0.00px;top:806.34px;width:26.00px;height:1.00px;background:#3a3a3a;"></div>
<div class="t" style="left:6.63px;top:793.69px;font-size:12px;line-height:12px;color:#f0f0f0;">34</div>
<div class="r" style="left:0.00px;top:823.31px;width:26.00px;height:1.00px;background:#3a3a3a;"></div>
<div class="t" style="left:6.63px;top:810.66px;font-size:12px;line-height:12px;color:#f0f0f0;">35</div>
<div class="r" style="left:0.00px;top:840.28px;width:26.00px;height:1.00px;background:#3a3a3a;"></div>
<div class="t" style="left:6.63px;top:827.63px;font-size:12px;line-height:12px;color:#f0f0f0;">36</div>
<div class="r" style="left:0.00px;top:857.25px;width:26.00px;height:1.00px;background:#3a3a3a;"></div>
<div class="t" style="left:6.63px;top:844.60px;font-size:12px;line-height:12px;color:#f0f0f0;">37</div>
<div class="r" style="left:0.00px;top:874.22px;width:26.00px;height:1.00px;background:#3a3a3a;"></div>
<div class="t" style="left:6.63px;top:861.57px;font-size:12px;line-height:12px;color:#f0f0f0;">38</div>
<div class="r" style="left:0.00px;top:891.19px;width:26.00px;height:1.00px;background:#3a3a3a;"></div>
<div class="t" style="left:6.63px;top:878.54px;font-size:12px;line-height:12px;color:#f0f0f0;">39</div>
<div class="r" style="left:26.00px;top:226.00px;width:1868.00px;height:666.50px;background:#ffffff;"></div>
<div class="r" style="left:1894.00px;top:208.00px;width:26.00px;height:685.00px;background:#0c0c0c;"></div>
<div class="r" style="left:1897.00px;top:228.00px;width:21.00px;height:664.00px;background:#151515;"></div>
<svg class="r" style="left:1901px;top:214px;" width="12" height="9" viewBox="0 0 12 9"><path d="M6 1l5.5 7.5h-11z" fill="#a0a0a0"/></svg>
<div class="r" style="left:1902.00px;top:229.50px;width:11.00px;height:627.20px;background:#9f9f9f;border-radius:5.5px;"></div>
<svg class="r" style="left:1901.5px;top:881.5px;" width="12.0" height="8.0" viewBox="0 0 12.0 8.0"><path d="M6 7.5l5.5-7.5h-11z" fill="#a0a0a0"/></svg>
<div class="r" style="left:1424.00px;top:279.50px;width:59.50px;height:19.00px;border:2px solid #1e7145;box-sizing:border-box;z-index:5;"></div>
<div class="r" style="left:1478.50px;top:294.00px;width:6.50px;height:6.50px;background:#1e7145;border:1px solid #fff;box-sizing:border-box;z-index:6;"></div>
<div class="r" style="left:26.00px;top:892.00px;width:1868.00px;height:8.00px;background:#ffffff;"></div>
<div class="r" style="left:0.00px;top:893.00px;width:141.00px;height:40.00px;background:#0a0a0a;border-radius:0 5px 0 0;"></div>
<div class="r" style="left:248.00px;top:893.00px;width:1672.00px;height:40.00px;background:#0a0a0a;border-radius:5px 0 0 0;"></div>
<div class="r" style="left:0.00px;top:892.50px;width:26.00px;height:5.50px;background:#0a0a0a;"></div>
<div class="r" style="left:1894.00px;top:892.50px;width:26.00px;height:5.50px;background:#0a0a0a;"></div>
<svg class="r" style="left:28px;top:903px;" width="14" height="16" viewBox="0 0 14 16"><path d="M10 1.5l-6.5 6.5 6.5 6.5" fill="none" stroke="#9a9a9a" stroke-width="1.5"/></svg>
<svg class="r" style="left:68px;top:903px;" width="14" height="16" viewBox="0 0 14 16"><path d="M4 1.5l6.5 6.5-6.5 6.5" fill="none" stroke="#9a9a9a" stroke-width="1.5"/></svg>
<div class="r" style="left:141.00px;top:892.50px;width:107.00px;height:35.50px;background:linear-gradient(#ffffff 30%,#e6e1fa);border-radius:0 0 5px 5px;"></div>
<div class="t" style="left:151.90px;top:901.78px;font-size:17.5px;line-height:17.5px;color:#1d2535;transform:scaleX(0.9731);transform-origin:left;-webkit-text-stroke:0.3px #1d2535;">DashBoard</div>
<div class="r" style="left:151.00px;top:922.50px;width:87.00px;height:2.25px;background:#1f6f6a;border-radius:1px;"></div>
<div class="r" style="left:253.50px;top:899.00px;width:1.50px;height:27.00px;background:#5a5a5a;"></div>
<div class="r" style="left:317.00px;top:899.00px;width:1.50px;height:27.00px;background:#5a5a5a;"></div>
<div class="r" style="left:520.50px;top:899.00px;width:1.50px;height:27.00px;background:#5a5a5a;"></div>
<div class="r" style="left:690.50px;top:899.00px;width:1.50px;height:27.00px;background:#5a5a5a;"></div>
<div class="r" style="left:918.50px;top:899.00px;width:1.50px;height:27.00px;background:#5a5a5a;"></div>
<div class="r" style="left:259.00px;top:898.00px;width:52.00px;height:30.00px;background:#a6a6a6;border-radius:5px;"></div>
<div class="t" style="left:270.00px;top:905.76px;font-size:18px;line-height:18px;color:#1a1a1a;transform:scaleX(0.9510);transform-origin:left;">Veri</div>
<div class="r" style="left:322.50px;top:898.00px;width:192.50px;height:30.00px;background:#7030a0;border-radius:5px;"></div>
<div class="t" style="left:336.30px;top:905.76px;font-size:18px;line-height:18px;color:#ffffff;transform:scaleX(0.9263);transform-origin:left;">Ürn. Cin. Sat. Fiy. Top.</div>
<div class="r" style="left:526.00px;top:898.00px;width:159.00px;height:30.00px;background:#ffc000;border-radius:5px;"></div>
<div class="t" style="left:541.30px;top:905.76px;font-size:18px;line-height:18px;color:#1a1a1a;transform:scaleX(0.9346);transform-origin:left;">Böl. Sat. Tut. Top.</div>
<div class="r" style="left:696.00px;top:898.00px;width:217.00px;height:30.00px;background:#ff0000;border-radius:5px;"></div>
<div class="t" style="left:709.50px;top:905.76px;font-size:18px;line-height:18px;color:#ffffff;transform:scaleX(0.9396);transform-origin:left;">Sat. Tems. Sat Adet. Top.</div>
<div class="r" style="left:923.5px;top:898px;width:132px;height:30px;background:#00b0f0;border-radius:5px 0 0 5px;overflow:hidden;"><div class="t" style="left:15.25px;top:7.76px;font-size:18px;line-height:18px;color:#1a2a4a;transform:scaleX(0.9220);transform-origin:left;">Böl. Kâr. Orn. Ort.</div></div>
<svg class="r" style="left:1066px;top:907px;" width="18" height="10" viewBox="0 0 18 10"><circle cx="3.2" cy="4.7" r="1.8" fill="#ddd"/><circle cx="8.5" cy="4.7" r="1.8" fill="#ddd"/><circle cx="13.8" cy="4.7" r="1.8" fill="#ddd"/></svg>
<svg class="r" style="left:1105px;top:902px;" width="20" height="20" viewBox="0 0 20 20"><path d="M10 3v14M3 10h14" stroke="#eee" stroke-width="1.3"/></svg>
<div class="r" style="left:1135.00px;top:893.00px;width:41.00px;height:39.00px;background:#111111;"></div>
<svg class="r" style="left:1154px;top:906px;" width="4" height="15" viewBox="0 0 4 15"><rect x="0.5" y="0" width="3" height="3" fill="#ddd"/><rect x="0.5" y="6" width="3" height="3" fill="#ddd"/><rect x="0.5" y="12" width="3" height="3" fill="#ddd"/></svg>
<div class="r" style="left:1176.00px;top:893.00px;width:721.00px;height:29.00px;background:#0e0e0e;"></div>
<svg class="r" style="left:1181px;top:906px;" width="10" height="12" viewBox="0 0 10 12"><path d="M1 6l8-5.5v11z" fill="#8a8a8a"/></svg>
<div class="r" style="left:1197.00px;top:907.00px;width:658.50px;height:11.00px;background:#a0a0a0;border-radius:5.5px;"></div>
<svg class="r" style="left:1882px;top:906px;" width="10" height="12" viewBox="0 0 10 12"><path d="M9 6l-8-5.5v11z" fill="#8a8a8a"/></svg>
<div class="r" style="left:0.00px;top:932.50px;width:1920.00px;height:1.50px;background:#303030;"></div>
<div class="r" style="left:0.00px;top:934.00px;width:1920.00px;height:26.00px;background:#151515;"></div>
<div class="t" style="left:9.60px;top:942.22px;font-size:12.5px;line-height:12.5px;color:#ececec;transform:scaleX(0.9798);transform-origin:left;">Ready</div>
<svg class="r" style="left:70px;top:939px;" width="19" height="17" viewBox="0 0 19 17"><rect x="1" y="1" width="16" height="14" fill="none" stroke="#d8d8d8" stroke-width="1.4"/><path d="M1 4h16M4 7h4M4 10h3M4 13h3" stroke="#d8d8d8" stroke-width="1.3"/><circle cx="12.5" cy="11.5" r="4" fill="#141414" stroke="#d8d8d8" stroke-width="1.4"/><circle cx="12.5" cy="11.5" r="1.5" fill="#d8d8d8"/></svg>
<svg class="r" style="left:110px;top:938px;" width="18" height="19" viewBox="0 0 18 19"><circle cx="9" cy="3" r="2" fill="none" stroke="#ddd" stroke-width="1.3"/><path d="M2 6.5l7 1.5 7-1.5M9 8v5l-4 5M9 13l3 3M11 12l6 6M17 12l-6 6" fill="none" stroke="#ddd" stroke-width="1.3"/></svg>
<div class="t" style="left:132.00px;top:942.22px;font-size:12.5px;line-height:12.5px;color:#ececec;transform:scaleX(1.0150);transform-origin:left;">Accessibility: Investigate</div>
<div class="r" style="left:1555.50px;top:933.50px;width:49.50px;height:26.50px;background:#262626;"></div>
<svg class="r" style="left:1570px;top:938px;" width="19" height="18" viewBox="0 0 19 18"><rect x="1" y="1" width="16" height="16" fill="none" stroke="#e0e0e0" stroke-width="1.5"/><path d="M6.3 1v16M11.7 1v16M1 6.3h16M1 11.7h16" stroke="#e0e0e0" stroke-width="1.5"/></svg>
<svg class="r" style="left:1620px;top:938px;" width="20" height="18" viewBox="0 0 20 18"><rect x="1" y="1" width="17" height="16" fill="none" stroke="#e0e0e0" stroke-width="1.5"/><rect x="4.5" y="4" width="10" height="10" fill="none" stroke="#e0e0e0" stroke-width="1.3"/><path d="M7 7h5M7 9.5h5M7 12h5" stroke="#e0e0e0" stroke-width="1.1"/></svg>
<svg class="r" style="left:1670px;top:938px;" width="20" height="18" viewBox="0 0 20 18"><rect x="1" y="1" width="17" height="16" fill="none" stroke="#e0e0e0" stroke-width="1.5"/><path d="M6 1v8h7v-8" fill="none" stroke="#e0e0e0" stroke-width="1.5"/></svg>
<div class="r" style="left:1711.00px;top:946.00px;width:10.00px;height:1.30px;background:#d0d0d0;"></div>
<div class="r" style="left:1728.00px;top:946.30px;width:125.00px;height:0.70px;background:#8a8a8a;"></div>
<div class="r" style="left:1767.50px;top:940.00px;width:5.50px;height:14.00px;background:#b8b8b8;border-radius:1px;"></div>
<div class="r" style="left:1790.00px;top:942.00px;width:1.00px;height:9.00px;background:#8a8a8a;"></div>
<svg class="r" style="left:1858px;top:940px;" width="11" height="13" viewBox="0 0 11 13"><path d="M5.5 1v11M0 6.5h11" stroke="#d0d0d0" stroke-width="1.3"/></svg>
<div class="t" style="left:1884.00px;top:942.22px;font-size:12.5px;line-height:12.5px;color:#ececec;">70%</div>
<div class="r" style="left:26.00px;top:226.00px;width:1288.00px;height:21.00px;background:#ff0000;"></div>
<div class="t" style="left:570.00px;top:231.59px;font-size:13px;line-height:13px;color:#1a0a0a;font-weight:700;transform:scaleX(1.0195);transform-origin:left;">ÜRÜN FİYAT  VE KAR VERİLERİ</div>
<div class="r" style="left:26.00px;top:265.00px;width:167.50px;height:228.00px;background:#ffffff;border:1px solid #f5d57f;box-sizing:border-box;border-left-width:0;"></div>
<div class="t" style="left:32.50px;top:271.86px;font-size:11.5px;line-height:11.5px;color:#0d0d0d;font-weight:700;transform:scaleX(0.9245);transform-origin:left;">Satış Temsilcisi</div>
<div class="r" style="left:32.00px;top:287.75px;width:153.00px;height:1.50px;background:#f2c75c;"></div>
<svg class="r" style="left:140.5px;top:271.1px" width="16" height="14" viewBox="0 0 16 14"><path d="M1.5 2.5l1.5 1.5 2.5-3.5M1.5 6.5l1.5 1.5 2.5-3.5M1.5 10.5l1.5 1.5 2.5-3.5" fill="none" stroke="#6a6a6a" stroke-width="1.1"/><path d="M7 2.5h8M7 6.7h8" stroke="#6a6a6a" stroke-width="1.2"/><path d="M7 11h8" stroke="#b0b0b0" stroke-width="1.2"/></svg>
<svg class="r" style="left:167.5px;top:270.6px" width="16" height="14" viewBox="0 0 16 14"><path d="M1 1h11l-4.3 4.5v4.5l-2.2 1v-5.5z" fill="#3f3f3f"/><path d="M7.5 7.5l6.5 6M14 7.5l-6.5 6" stroke="#3f3f3f" stroke-width="1.7"/><rect x="0" y="8" width="1" height="1.2" fill="#777"/><rect x="0" y="12" width="1" height="1.2" fill="#777"/></svg>
<div class="r" style="left:32.00px;top:293.00px;width:154.00px;height:21.50px;background:#ffe699;border:1px solid #b6a678;box-sizing:border-box;border-radius:4.5px;"></div>
<div class="t" style="left:39.50px;top:298.96px;font-size:11.5px;line-height:11.5px;color:#111111;transform:scaleX(1.0333);transform-origin:left;">Ahsen Özdemir</div>
<div class="r" style="left:32.00px;top:318.00px;width:154.00px;height:21.50px;background:#ffe699;border:1px solid #b6a678;box-sizing:border-box;border-radius:4.5px;"></div>
<div class="t" style="left:39.50px;top:323.96px;font-size:11.5px;line-height:11.5px;color:#111111;transform:scaleX(1.0275);transform-origin:left;">Doğukan Özdağ</div>
<div class="r" style="left:32.00px;top:343.00px;width:154.00px;height:21.50px;background:#ffe699;border:1px solid #b6a678;box-sizing:border-box;border-radius:4.5px;"></div>
<div class="t" style="left:39.50px;top:348.96px;font-size:11.5px;line-height:11.5px;color:#111111;transform:scaleX(1.0335);transform-origin:left;">Furkan Sarıkaya</div>
<div class="r" style="left:32.00px;top:368.00px;width:154.00px;height:21.50px;background:#ffe699;border:1px solid #b6a678;box-sizing:border-box;border-radius:4.5px;"></div>
<div class="t" style="left:39.50px;top:373.96px;font-size:11.5px;line-height:11.5px;color:#111111;transform:scaleX(1.0355);transform-origin:left;">Kumsal Yılmaz</div>
<div class="r" style="left:32.00px;top:393.00px;width:154.00px;height:21.50px;background:#ffe699;border:1px solid #b6a678;box-sizing:border-box;border-radius:4.5px;"></div>
<div class="t" style="left:39.50px;top:398.96px;font-size:11.5px;line-height:11.5px;color:#111111;transform:scaleX(1.0107);transform-origin:left;">Naciye Şamcı</div>
<div class="r" style="left:32.00px;top:418.00px;width:154.00px;height:21.50px;background:#ffe699;border:1px solid #b6a678;box-sizing:border-box;border-radius:4.5px;"></div>
<div class="t" style="left:39.50px;top:423.96px;font-size:11.5px;line-height:11.5px;color:#111111;transform:scaleX(1.0655);transform-origin:left;">Onur Fidan</div>
<div class="r" style="left:26.00px;top:492.50px;width:167.50px;height:152.00px;background:#ffffff;border:1px solid #a9d18e;box-sizing:border-box;border-left-width:0;"></div>
<div class="t" style="left:32.50px;top:498.76px;font-size:11.5px;line-height:11.5px;color:#0d0d0d;font-weight:700;transform:scaleX(0.9288);transform-origin:left;">Ürün Cinsi</div>
<div class="r" style="left:32.00px;top:514.85px;width:153.00px;height:1.50px;background:#6f9e50;"></div>
<svg class="r" style="left:140.5px;top:498.0px" width="16" height="14" viewBox="0 0 16 14"><path d="M1.5 2.5l1.5 1.5 2.5-3.5M1.5 6.5l1.5 1.5 2.5-3.5M1.5 10.5l1.5 1.5 2.5-3.5" fill="none" stroke="#6a6a6a" stroke-width="1.1"/><path d="M7 2.5h8M7 6.7h8" stroke="#6a6a6a" stroke-width="1.2"/><path d="M7 11h8" stroke="#b0b0b0" stroke-width="1.2"/></svg>
<svg class="r" style="left:167.5px;top:497.5px" width="16" height="14" viewBox="0 0 16 14"><path d="M1 1h11l-4.3 4.5v4.5l-2.2 1v-5.5z" fill="#3f3f3f"/><path d="M7.5 7.5l6.5 6M14 7.5l-6.5 6" stroke="#3f3f3f" stroke-width="1.7"/><rect x="0" y="8" width="1" height="1.2" fill="#777"/><rect x="0" y="12" width="1" height="1.2" fill="#777"/></svg>
<div class="r" style="left:32.00px;top:520.00px;width:154.00px;height:21.50px;background:#c5e0b4;border:1px solid #8da37f;box-sizing:border-box;border-radius:4.5px;"></div>
<div class="t" style="left:39.50px;top:525.96px;font-size:11.5px;line-height:11.5px;color:#111111;transform:scaleX(0.8996);transform-origin:left;">A</div>
<div class="r" style="left:32.00px;top:545.00px;width:154.00px;height:21.50px;background:#c5e0b4;border:1px solid #8da37f;box-sizing:border-box;border-radius:4.5px;"></div>
<div class="t" style="left:39.50px;top:550.96px;font-size:11.5px;line-height:11.5px;color:#111111;transform:scaleX(0.8996);transform-origin:left;">B</div>
<div class="r" style="left:32.00px;top:570.00px;width:154.00px;height:21.50px;background:#c5e0b4;border:1px solid #8da37f;box-sizing:border-box;border-radius:4.5px;"></div>
<div class="t" style="left:39.50px;top:575.96px;font-size:11.5px;line-height:11.5px;color:#111111;transform:scaleX(0.8429);transform-origin:left;">C</div>
<div class="r" style="left:32.00px;top:595.00px;width:154.00px;height:21.50px;background:#c5e0b4;border:1px solid #8da37f;box-sizing:border-box;border-radius:4.5px;"></div>
<div class="t" style="left:39.50px;top:600.96px;font-size:11.5px;line-height:11.5px;color:#111111;transform:scaleX(0.8790);transform-origin:left;">D</div>
<div class="r" style="left:26.00px;top:643.50px;width:167.30px;height:227.30px;background:#ffffff;border:1px solid #e8a06a;box-sizing:border-box;border-left-width:0;"></div>
<div class="t" style="left:32.50px;top:651.01px;font-size:11.5px;line-height:11.5px;color:#0d0d0d;font-weight:700;transform:scaleX(0.9486);transform-origin:left;">Satış Tarihi</div>
<div class="r" style="left:32.00px;top:666.75px;width:153.00px;height:1.50px;background:#e0874a;"></div>
<svg class="r" style="left:140.5px;top:650.25px" width="16" height="14" viewBox="0 0 16 14"><path d="M1.5 2.5l1.5 1.5 2.5-3.5M1.5 6.5l1.5 1.5 2.5-3.5M1.5 10.5l1.5 1.5 2.5-3.5" fill="none" stroke="#6a6a6a" stroke-width="1.1"/><path d="M7 2.5h8M7 6.7h8" stroke="#6a6a6a" stroke-width="1.2"/><path d="M7 11h8" stroke="#b0b0b0" stroke-width="1.2"/></svg>
<svg class="r" style="left:167.5px;top:649.75px" width="16" height="14" viewBox="0 0 16 14"><path d="M1 1h11l-4.3 4.5v4.5l-2.2 1v-5.5z" fill="#3f3f3f"/><path d="M7.5 7.5l6.5 6M14 7.5l-6.5 6" stroke="#3f3f3f" stroke-width="1.7"/><rect x="0" y="8" width="1" height="1.2" fill="#777"/><rect x="0" y="12" width="1" height="1.2" fill="#777"/></svg>
<div class="r" style="left:32.00px;top:671.25px;width:154.00px;height:21.50px;background:#ed7d31;border-radius:4.5px;"></div>
<div class="t" style="left:39.50px;top:677.21px;font-size:11.5px;line-height:11.5px;color:#fdf3ea;transform:scaleX(1.1448);transform-origin:left;">8/3/2022</div>
<div class="r" style="left:32.00px;top:696.25px;width:154.00px;height:21.50px;background:#ed7d31;border-radius:4.5px;"></div>
<div class="t" style="left:39.50px;top:702.21px;font-size:11.5px;line-height:11.5px;color:#fdf3ea;transform:scaleX(1.1448);transform-origin:left;">8/4/2022</div>
<div class="r" style="left:32.00px;top:721.25px;width:154.00px;height:21.50px;background:#ed7d31;border-radius:4.5px;"></div>
<div class="t" style="left:39.50px;top:727.21px;font-size:11.5px;line-height:11.5px;color:#fdf3ea;transform:scaleX(1.1448);transform-origin:left;">8/5/2022</div>
<div class="r" style="left:32.00px;top:746.25px;width:154.00px;height:21.50px;background:#ed7d31;border-radius:4.5px;"></div>
<div class="t" style="left:39.50px;top:752.21px;font-size:11.5px;line-height:11.5px;color:#fdf3ea;transform:scaleX(1.1448);transform-origin:left;">8/6/2022</div>
<div class="r" style="left:32.00px;top:771.25px;width:154.00px;height:21.50px;background:#ed7d31;border-radius:4.5px;"></div>
<div class="t" style="left:39.50px;top:777.21px;font-size:11.5px;line-height:11.5px;color:#fdf3ea;transform:scaleX(1.1448);transform-origin:left;">8/7/2022</div>
<div class="r" style="left:32.00px;top:796.25px;width:154.00px;height:21.50px;background:#ed7d31;border-radius:4.5px;"></div>
<div class="t" style="left:39.50px;top:802.21px;font-size:11.5px;line-height:11.5px;color:#fdf3ea;transform:scaleX(1.1448);transform-origin:left;">8/8/2022</div>
<div class="r" style="left:32.00px;top:821.25px;width:154.00px;height:21.50px;background:#ed7d31;border-radius:4.5px;"></div>
<div class="t" style="left:39.50px;top:827.21px;font-size:11.5px;line-height:11.5px;color:#fdf3ea;transform:scaleX(1.1448);transform-origin:left;">8/9/2022</div>
<div class="r" style="left:1136.00px;top:264.00px;width:180.00px;height:227.50px;background:#ffffff;border:1px solid #7f9cc8;box-sizing:border-box;"></div>
<div class="t" style="left:1143.50px;top:271.86px;font-size:11.5px;line-height:11.5px;color:#0d0d0d;font-weight:700;transform:scaleX(0.9579);transform-origin:left;">Kar Oranı</div>
<div class="r" style="left:1143.00px;top:287.25px;width:164.00px;height:1.50px;background:#6a8fc8;"></div>
<svg class="r" style="left:1262.5px;top:271.1px" width="16" height="14" viewBox="0 0 16 14"><path d="M1.5 2.5l1.5 1.5 2.5-3.5M1.5 6.5l1.5 1.5 2.5-3.5M1.5 10.5l1.5 1.5 2.5-3.5" fill="none" stroke="#6a6a6a" stroke-width="1.1"/><path d="M7 2.5h8M7 6.7h8" stroke="#6a6a6a" stroke-width="1.2"/><path d="M7 11h8" stroke="#b0b0b0" stroke-width="1.2"/></svg>
<svg class="r" style="left:1289.5px;top:270.6px" width="16" height="14" viewBox="0 0 16 14"><path d="M1 1h11l-4.3 4.5v4.5l-2.2 1v-5.5z" fill="#3f3f3f"/><path d="M7.5 7.5l6.5 6M14 7.5l-6.5 6" stroke="#3f3f3f" stroke-width="1.7"/><rect x="0" y="8" width="1" height="1.2" fill="#777"/><rect x="0" y="12" width="1" height="1.2" fill="#777"/></svg>
<div class="r" style="left:1143.00px;top:292.25px;width:165.00px;height:21.25px;background:#5b9bd5;border-radius:4.5px;"></div>
<div class="t" style="left:1150.50px;top:298.21px;font-size:11.5px;line-height:11.5px;color:#f4f8fc;transform:scaleX(1.0077);transform-origin:left;">11.7%</div>
<div class="r" style="left:1143.00px;top:317.25px;width:165.00px;height:21.25px;background:#5b9bd5;border-radius:4.5px;"></div>
<div class="t" style="left:1150.50px;top:323.21px;font-size:11.5px;line-height:11.5px;color:#f4f8fc;transform:scaleX(0.9813);transform-origin:left;">14.3%</div>
<div class="r" style="left:1143.00px;top:342.25px;width:165.00px;height:21.25px;background:#5b9bd5;border-radius:4.5px;"></div>
<div class="t" style="left:1150.50px;top:348.21px;font-size:11.5px;line-height:11.5px;color:#f4f8fc;transform:scaleX(0.9813);transform-origin:left;">17.1%</div>
<div class="r" style="left:1143.00px;top:367.25px;width:165.00px;height:21.25px;background:#5b9bd5;border-radius:4.5px;"></div>
<div class="t" style="left:1150.50px;top:373.21px;font-size:11.5px;line-height:11.5px;color:#f4f8fc;transform:scaleX(0.9813);transform-origin:left;">24.6%</div>
<div class="r" style="left:1136.50px;top:493.00px;width:176.50px;height:5.00px;border:1px solid #a8a8a8;box-sizing:border-box;border-bottom-width:0;"></div>
<div class="r" style="left:1136.50px;top:496.00px;width:178.00px;height:165.00px;background:#ffffff;border:1px solid #a5a5a5;box-sizing:border-box;"></div>
<div class="t" style="left:1144.50px;top:503.26px;font-size:11.5px;line-height:11.5px;color:#0d0d0d;font-weight:700;transform:scaleX(0.9171);transform-origin:left;">Bölge</div>
<div class="r" style="left:1144.00px;top:518.65px;width:163.00px;height:1.50px;background:#8a8a8a;"></div>
<svg class="r" style="left:1262.5px;top:502.5px" width="16" height="14" viewBox="0 0 16 14"><path d="M1.5 2.5l1.5 1.5 2.5-3.5M1.5 6.5l1.5 1.5 2.5-3.5M1.5 10.5l1.5 1.5 2.5-3.5" fill="none" stroke="#6a6a6a" stroke-width="1.1"/><path d="M7 2.5h8M7 6.7h8" stroke="#6a6a6a" stroke-width="1.2"/><path d="M7 11h8" stroke="#b0b0b0" stroke-width="1.2"/></svg>
<svg class="r" style="left:1289.5px;top:502px" width="16" height="14" viewBox="0 0 16 14"><path d="M1 1h11l-4.3 4.5v4.5l-2.2 1v-5.5z" fill="#3f3f3f"/><path d="M7.5 7.5l6.5 6M14 7.5l-6.5 6" stroke="#3f3f3f" stroke-width="1.7"/><rect x="0" y="8" width="1" height="1.2" fill="#777"/><rect x="0" y="12" width="1" height="1.2" fill="#777"/></svg>
<div class="r" style="left:1144.00px;top:524.40px;width:164.00px;height:21.25px;background:#a5a5a5;border-radius:4.5px;"></div>
<div class="t" style="left:1151.50px;top:530.36px;font-size:11.5px;line-height:11.5px;color:#fbfbfb;transform:scaleX(1.0143);transform-origin:left;">Akdeniz</div>
<div class="r" style="left:1144.00px;top:549.40px;width:164.00px;height:21.25px;background:#a5a5a5;border-radius:4.5px;"></div>
<div class="t" style="left:1151.50px;top:555.36px;font-size:11.5px;line-height:11.5px;color:#fbfbfb;transform:scaleX(0.8430);transform-origin:left;">Ege</div>
<div class="r" style="left:1144.00px;top:574.40px;width:164.00px;height:21.25px;background:#a5a5a5;border-radius:4.5px;"></div>
<div class="t" style="left:1151.50px;top:580.36px;font-size:11.5px;line-height:11.5px;color:#fbfbfb;transform:scaleX(1.1150);transform-origin:left;">Marmara</div>
<div class="r" style="left:1136.50px;top:660.00px;width:182.50px;height:211.50px;background:#ffffff;border:1px solid #84b062;box-sizing:border-box;"></div>
<div class="t" style="left:1143.50px;top:666.86px;font-size:11.5px;line-height:11.5px;color:#0d0d0d;font-weight:700;transform:scaleX(0.9255);transform-origin:left;">Satış Fiyatı</div>
<div class="r" style="left:1143.00px;top:682.25px;width:168.00px;height:1.50px;background:#70ad47;"></div>
<svg class="r" style="left:1266.5px;top:666.1px" width="16" height="14" viewBox="0 0 16 14"><path d="M1.5 2.5l1.5 1.5 2.5-3.5M1.5 6.5l1.5 1.5 2.5-3.5M1.5 10.5l1.5 1.5 2.5-3.5" fill="none" stroke="#6a6a6a" stroke-width="1.1"/><path d="M7 2.5h8M7 6.7h8" stroke="#6a6a6a" stroke-width="1.2"/><path d="M7 11h8" stroke="#b0b0b0" stroke-width="1.2"/></svg>
<svg class="r" style="left:1293.5px;top:665.6px" width="16" height="14" viewBox="0 0 16 14"><path d="M1 1h11l-4.3 4.5v4.5l-2.2 1v-5.5z" fill="#3f3f3f"/><path d="M7.5 7.5l6.5 6M14 7.5l-6.5 6" stroke="#3f3f3f" stroke-width="1.7"/><rect x="0" y="8" width="1" height="1.2" fill="#777"/><rect x="0" y="12" width="1" height="1.2" fill="#777"/></svg>
<div class="r" style="left:1143.00px;top:688.00px;width:169.00px;height:21.75px;background:#70ad47;border-radius:4.5px;"></div>
<div class="t" style="left:1150.50px;top:693.96px;font-size:11.5px;line-height:11.5px;color:#f6fbf2;transform:scaleX(1.0731);transform-origin:left;">Ł1,245</div>
<div class="r" style="left:1143.00px;top:713.00px;width:169.00px;height:21.75px;background:#70ad47;border-radius:4.5px;"></div>
<div class="t" style="left:1150.50px;top:718.96px;font-size:11.5px;line-height:11.5px;color:#f6fbf2;transform:scaleX(1.0731);transform-origin:left;">Ł2,634</div>
<div class="r" style="left:1143.00px;top:738.00px;width:169.00px;height:21.75px;background:#70ad47;border-radius:4.5px;"></div>
<div class="t" style="left:1150.50px;top:743.96px;font-size:11.5px;line-height:11.5px;color:#f6fbf2;transform:scaleX(1.0731);transform-origin:left;">Ł3,264</div>
<div class="r" style="left:1143.00px;top:763.00px;width:169.00px;height:21.75px;background:#70ad47;border-radius:4.5px;"></div>
<div class="t" style="left:1150.50px;top:768.96px;font-size:11.5px;line-height:11.5px;color:#f6fbf2;transform:scaleX(1.0731);transform-origin:left;">Ł4,631</div>
<div class="r" style="left:194.00px;top:264.00px;width:469.50px;height:303.50px;background:#ffffff;border-top:1px solid #d9d9d9;box-sizing:border-box;"></div>
<div class="t" style="left:277.00px;top:284.46px;font-size:18px;line-height:18px;color:#7f7f7f;font-weight:700;letter-spacing:1.2px;transform:scaleX(1.0108);transform-origin:left;">ÜRÜN CİNSLERİNİN SATIŞ FİYATI</div>
<div class="t" style="left:393.50px;top:309.76px;font-size:18px;line-height:18px;color:#7f7f7f;font-weight:700;letter-spacing:1.2px;transform:scaleX(1.0441);transform-origin:left;">TOPLAMI</div>
<div class="t" style="left:205.20px;top:341.91px;font-size:10.5px;line-height:10.5px;color:#595959;transform:scaleX(0.9202);transform-origin:right;">Ł140,000</div>
<div class="t" style="left:206.00px;top:369.41px;font-size:10.5px;line-height:10.5px;color:#595959;transform:scaleX(0.9133);transform-origin:right;">Ł120,000</div>
<div class="t" style="left:207.20px;top:396.41px;font-size:10.5px;line-height:10.5px;color:#595959;transform:scaleX(0.9133);transform-origin:right;">Ł100,000</div>
<div class="t" style="left:214.04px;top:423.81px;font-size:10.5px;line-height:10.5px;color:#595959;transform:scaleX(0.9010);transform-origin:right;">Ł80,000</div>
<div class="t" style="left:215.34px;top:450.81px;font-size:10.5px;line-height:10.5px;color:#595959;transform:scaleX(0.9010);transform-origin:right;">Ł60,000</div>
<div class="t" style="left:216.54px;top:477.81px;font-size:10.5px;line-height:10.5px;color:#595959;transform:scaleX(0.9010);transform-origin:right;">Ł40,000</div>
<div class="t" style="left:217.74px;top:504.11px;font-size:10.5px;line-height:10.5px;color:#595959;transform:scaleX(0.9010);transform-origin:right;">Ł20,000</div>
<div class="t" style="left:242.96px;top:530.11px;font-size:10.5px;line-height:10.5px;color:#595959;transform:scaleX(0.9212);transform-origin:right;">Ł-</div>
<svg class="r" style="left:0px;top:0px;pointer-events:none;" width="1920" height="960" viewBox="0 0 1920 960"><defs><pattern id="hb" width="3.4" height="3.4" patternUnits="userSpaceOnUse" patternTransform="rotate(45)"><rect width="3.4" height="3.4" fill="#edf2fb"/><rect width="1.5" height="3.4" fill="#92b1e3"/></pattern><pattern id="hd" width="3.6" height="3.6" patternUnits="userSpaceOnUse" patternTransform="rotate(45)"><rect width="3.6" height="3.6" fill="#5b7bb8"/><rect width="1.7" height="3.6" fill="#3f5f9c"/></pattern></defs><polygon points="269,534 279,524.7 628.8,524.7 636,534" fill="#bfbfbf"/><polygon points="329,358.8 335,358.8 338.2,527 332.7,534" fill="url(#hd)" stroke="#4a6aa8" stroke-width="0.8"/><polygon points="290.7,358.8 329,358.8 332.7,534 296.5,534" fill="url(#hb)" stroke="#4472c4" stroke-width="1.1"/><rect x="290.7" y="358.8" width="38.30000000000001" height="3" fill="#5a7cc0"/><polygon points="387.3,415.8 425,415.8 425.3,534 389.3,534" fill="url(#hb)" stroke="#4472c4" stroke-width="1.1"/><rect x="387.3" y="415.8" width="37.69999999999999" height="3" fill="#5a7cc0"/><polygon points="480.9,388.1 519,388.1 517.3,534 480.9,534" fill="url(#hb)" stroke="#4472c4" stroke-width="1.1"/><rect x="480.9" y="388.1" width="38.10000000000002" height="3" fill="#5a7cc0"/><polygon points="570.7,445.0 575.7,446.5 572.5,534 568.5,527" fill="#3d5a8e" stroke="#3d5a8e" stroke-width="0.8"/><polygon points="575.7,446.5 612.1,446.5 610,534 572.5,534" fill="url(#hb)" stroke="#4472c4" stroke-width="1.1"/><rect x="575.7" y="446.5" width="36.39999999999998" height="3" fill="#5a7cc0"/><path d="M281 340.3H342.7V357.3H307.3L309 377.3L291.5 357.3H281Z" fill="#ffffff" stroke="#c8c8c8" stroke-width="0.9"/><path d="M378 397.4H434V414.3H403.7L405.3 434.2L387.3 414.3H378Z" fill="#ffffff" stroke="#c8c8c8" stroke-width="0.9"/><path d="M469.4 370H529.4V387.5H519.4L502.75 406.9L500.7 387.5H469.4Z" fill="#ffffff" stroke="#c8c8c8" stroke-width="0.9"/><path d="M564.2 427.3H620.5V444.4H612.1L595.4 463.1L594.4 444.4H564.2Z" fill="#ffffff" stroke="#c8c8c8" stroke-width="0.9"/></svg>
<div class="t" style="left:285.30px;top:343.61px;font-size:10.5px;line-height:10.5px;color:#404040;transform:scaleX(0.8883);transform-origin:left;">A,  Ł129,668</div>
<div class="t" style="left:382.70px;top:401.81px;font-size:10.5px;line-height:10.5px;color:#404040;transform:scaleX(0.8769);transform-origin:left;">B,  Ł88,128</div>
<div class="t" style="left:473.20px;top:374.01px;font-size:10.5px;line-height:10.5px;color:#404040;transform:scaleX(0.8731);transform-origin:left;">C,  Ł107,994</div>
<div class="t" style="left:568.40px;top:431.71px;font-size:10.5px;line-height:10.5px;color:#404040;transform:scaleX(0.8823);transform-origin:left;">D,  Ł65,985</div>
<div class="t" style="left:311.80px;top:542.81px;font-size:10.5px;line-height:10.5px;color:#595959;">A</div>
<div class="t" style="left:403.50px;top:542.81px;font-size:10.5px;line-height:10.5px;color:#595959;">B</div>
<div class="t" style="left:495.21px;top:542.81px;font-size:10.5px;line-height:10.5px;color:#595959;">C</div>
<div class="t" style="left:586.91px;top:542.81px;font-size:10.5px;line-height:10.5px;color:#595959;">D</div>
<div class="r" style="left:664.00px;top:265.00px;width:471.00px;height:304.00px;background:#ffc000;"></div>
<div class="t" style="left:750.00px;top:278.45px;font-size:16px;line-height:16px;color:#ffffff;font-weight:700;letter-spacing:1px;transform:scaleX(0.9127);transform-origin:left;">BÖLGELERİN SATIŞ TUTARI TOPLAMI</div>
<div class="t" style="left:673.00px;top:304.33px;font-size:10px;line-height:10px;color:#fff8e6;transform:scaleX(0.9798);transform-origin:left;">Ł154,000.00</div>
<div class="t" style="left:673.00px;top:327.37px;font-size:10px;line-height:10px;color:#fff8e6;transform:scaleX(0.9798);transform-origin:left;">Ł153,500.00</div>
<div class="t" style="left:673.00px;top:350.41px;font-size:10px;line-height:10px;color:#fff8e6;transform:scaleX(0.9798);transform-origin:left;">Ł153,000.00</div>
<div class="t" style="left:673.00px;top:373.45px;font-size:10px;line-height:10px;color:#fff8e6;transform:scaleX(0.9798);transform-origin:left;">Ł152,500.00</div>
<div class="t" style="left:673.00px;top:396.49px;font-size:10px;line-height:10px;color:#fff8e6;transform:scaleX(0.9798);transform-origin:left;">Ł152,000.00</div>
<div class="t" style="left:673.00px;top:419.53px;font-size:10px;line-height:10px;color:#fff8e6;transform:scaleX(0.9798);transform-origin:left;">Ł151,500.00</div>
<div class="t" style="left:673.00px;top:442.57px;font-size:10px;line-height:10px;color:#fff8e6;transform:scaleX(0.9798);transform-origin:left;">Ł151,000.00</div>
<div class="t" style="left:673.00px;top:465.61px;font-size:10px;line-height:10px;color:#fff8e6;transform:scaleX(0.9798);transform-origin:left;">Ł150,500.00</div>
<div class="t" style="left:673.00px;top:488.65px;font-size:10px;line-height:10px;color:#fff8e6;transform:scaleX(0.9798);transform-origin:left;">Ł150,000.00</div>
<div class="t" style="left:673.00px;top:511.69px;font-size:10px;line-height:10px;color:#fff8e6;transform:scaleX(0.9798);transform-origin:left;">Ł149,500.00</div>
<div class="t" style="left:673.00px;top:534.73px;font-size:10px;line-height:10px;color:#fff8e6;transform:scaleX(0.9798);transform-origin:left;">Ł149,000.00</div>
<svg class="r" style="left:0px;top:0px;pointer-events:none;" width="1920" height="960" viewBox="0 0 1920 960"><path d="M737 540.7H1121" stroke="#ffffff" stroke-width="1.2"/><path d="M802.6 333.86173419999943V540.7" stroke="#fff3cf" stroke-width="0.8" stroke-opacity="0.85"/><path d="M930.4 381.5690938000004V540.7" stroke="#fff3cf" stroke-width="0.8" stroke-opacity="0.85"/><path d="M1057.4 468.66282639999986V540.7" stroke="#fff3cf" stroke-width="0.8" stroke-opacity="0.85"/><polyline points="802.6,333.86173419999943 930.4,381.5690938000004 1057.4,468.66282639999986" fill="none" stroke="#ffffff" stroke-width="3.2" stroke-linejoin="round"/><circle cx="802.6" cy="333.86173419999943" r="3.3" fill="#ffc000" stroke="#ffffff" stroke-width="1.6"/><circle cx="930.4" cy="381.5690938000004" r="3.3" fill="#ffc000" stroke="#ffffff" stroke-width="1.6"/><circle cx="1057.4" cy="468.66282639999986" r="3.3" fill="#ffc000" stroke="#ffffff" stroke-width="1.6"/></svg>
<div class="t" style="left:777.00px;top:314.86px;font-size:9.5px;line-height:9.5px;color:#ffffff;font-weight:700;transform:scaleX(1.0066);transform-origin:left;">Ł153,492.39</div>
<div class="t" style="left:904.60px;top:362.46px;font-size:9.5px;line-height:9.5px;color:#ffffff;font-weight:700;">Ł152,460.21</div>
<div class="t" style="left:1032.50px;top:449.46px;font-size:9.5px;line-height:9.5px;color:#ffffff;font-weight:700;">Ł150,575.88</div>
<div class="t" style="left:779.83px;top:549.33px;font-size:10px;line-height:10px;color:#fff2cc;font-weight:700;letter-spacing:0.8px;transform:scaleX(0.9216);transform-origin:center;">Akdeniz</div>
<div class="t" style="left:919.13px;top:549.33px;font-size:10px;line-height:10px;color:#fff2cc;font-weight:700;letter-spacing:0.8px;transform:scaleX(0.8485);transform-origin:center;">Ege</div>
<div class="t" style="left:1033.35px;top:549.33px;font-size:10px;line-height:10px;color:#fff2cc;font-weight:700;letter-spacing:0.8px;transform:scaleX(1.0086);transform-origin:center;">Marmara</div>
<div class="r" style="left:194.00px;top:567.50px;width:469.50px;height:302.00px;background:radial-gradient(ellipse 70% 75% at 62% 58%, #4b4b4b 0%, #3b3b3b 50%, #282828 100%);"></div>
<div class="t" style="left:251.50px;top:586.45px;font-size:16px;line-height:16px;color:#f2f2f2;font-weight:700;letter-spacing:0.6px;transform:scaleX(1.0630);transform-origin:left;">Satış Temsilcilerinin Satış Adeti Toplamı</div>
<svg class="r" style="left:0px;top:0px;pointer-events:none;" width="1920" height="960" viewBox="0 0 1920 960"><defs><radialGradient id="ps" cx="0.5" cy="0.5" r="0.5"><stop offset="0.85" stop-color="#000" stop-opacity="0.35"/><stop offset="1" stop-color="#000" stop-opacity="0"/></radialGradient><linearGradient id="pg" x1="0" y1="0" x2="0" y2="1"><stop offset="0" stop-color="#fff" stop-opacity="0.10"/><stop offset="0.5" stop-color="#fff" stop-opacity="0"/><stop offset="1" stop-color="#000" stop-opacity="0.08"/></linearGradient></defs><circle cx="382.8" cy="738.3" r="128.8" fill="url(#ps)"/><path d="M381.8 735.3L381.80 613.50A121.8 121.8 0 0 1 390.56 613.82Z" fill="#4472c4"/><path d="M381.8 735.3L390.56 613.82A121.8 121.8 0 0 1 501.70 713.89Z" fill="#ed7d31"/><path d="M381.8 735.3L501.70 713.89A121.8 121.8 0 0 1 424.95 849.20Z" fill="#a5a5a5"/><path d="M381.8 735.3L424.95 849.20A121.8 121.8 0 0 1 307.02 831.44Z" fill="#ffc000"/><path d="M381.8 735.3L307.02 831.44A121.8 121.8 0 0 1 278.79 670.31Z" fill="#5b9bd5"/><path d="M381.8 735.3L278.79 670.31A121.8 121.8 0 0 1 381.80 613.50Z" fill="#70ad47"/><circle cx="381.8" cy="735.3" r="121.8" fill="url(#pg)"/></svg>
<div class="t" style="left:379.44px;top:622.63px;font-size:10px;line-height:10px;color:#e6e6e6;">33</div>
<div class="t" style="left:444.26px;top:652.33px;font-size:10px;line-height:10px;color:#e6e6e6;">606</div>
<div class="t" style="left:463.66px;top:782.73px;font-size:10px;line-height:10px;color:#e6e6e6;">635</div>
<div class="t" style="left:356.46px;top:839.33px;font-size:10px;line-height:10px;color:#e6e6e6;">469</div>
<div class="t" style="left:269.66px;top:749.73px;font-size:10px;line-height:10px;color:#e6e6e6;">675</div>
<div class="t" style="left:321.06px;top:637.53px;font-size:10px;line-height:10px;color:#e6e6e6;">462</div>
<div class="r" style="left:576.50px;top:682.40px;width:6.00px;height:6.00px;background:#4472c4;"></div>
<div class="t" style="left:584.60px;top:681.43px;font-size:10px;line-height:10px;color:#d9d9d9;transform:scaleX(0.9344);transform-origin:left;">Ahsen Özdemir</div>
<div class="r" style="left:576.50px;top:702.60px;width:6.00px;height:6.00px;background:#ed7d31;"></div>
<div class="t" style="left:584.60px;top:701.63px;font-size:10px;line-height:10px;color:#d9d9d9;transform:scaleX(0.9214);transform-origin:left;">Doğukan Özdağ</div>
<div class="r" style="left:576.50px;top:722.75px;width:6.00px;height:6.00px;background:#a5a5a5;"></div>
<div class="t" style="left:584.60px;top:721.78px;font-size:10px;line-height:10px;color:#d9d9d9;transform:scaleX(0.9077);transform-origin:left;">Furkan Sarıkaya</div>
<div class="r" style="left:576.50px;top:741.50px;width:6.00px;height:6.00px;background:#ffc000;"></div>
<div class="t" style="left:584.60px;top:740.53px;font-size:10px;line-height:10px;color:#d9d9d9;transform:scaleX(0.9156);transform-origin:left;">Kumsal Yılmaz</div>
<div class="r" style="left:576.50px;top:761.70px;width:6.00px;height:6.00px;background:#5b9bd5;"></div>
<div class="t" style="left:584.60px;top:760.73px;font-size:10px;line-height:10px;color:#d9d9d9;transform:scaleX(0.9061);transform-origin:left;">Naciye Şamcı</div>
<div class="r" style="left:576.50px;top:781.50px;width:6.00px;height:6.00px;background:#70ad47;"></div>
<div class="t" style="left:584.60px;top:780.53px;font-size:10px;line-height:10px;color:#d9d9d9;transform:scaleX(0.9414);transform-origin:left;">Onur Fidan</div>
<div class="r" style="left:664.00px;top:569.50px;width:471.00px;height:303.00px;background:#ffffff;border:1px solid #d9d9d9;box-sizing:border-box;"></div>
<div class="t" style="left:771.60px;top:582.01px;font-size:17px;line-height:17px;color:#595959;letter-spacing:0.4px;">Bölgelerin Kâr Oranı Ortalaması</div>
<div class="t" style="left:679.44px;top:651.03px;font-size:10px;line-height:10px;color:#595959;transform:scaleX(0.9344);transform-origin:right;">17.0%</div>
<div class="t" style="left:681.24px;top:684.28px;font-size:10px;line-height:10px;color:#595959;transform:scaleX(0.9344);transform-origin:right;">16.5%</div>
<div class="t" style="left:682.64px;top:716.13px;font-size:10px;line-height:10px;color:#595959;transform:scaleX(0.9344);transform-origin:right;">16.0%</div>
<div class="t" style="left:684.64px;top:747.33px;font-size:10px;line-height:10px;color:#595959;transform:scaleX(0.9344);transform-origin:right;">15.5%</div>
<div class="t" style="left:686.24px;top:778.13px;font-size:10px;line-height:10px;color:#595959;transform:scaleX(0.9344);transform-origin:right;">15.0%</div>
<svg class="r" style="left:0px;top:0px;pointer-events:none;" width="1920" height="960" viewBox="0 0 1920 960"><polyline points="716.5,654 762,640.5 1040,657" fill="none" stroke="#eaeaea" stroke-width="0.9"/><polyline points="718.5,686 764,672.5 1040,689" fill="none" stroke="#eaeaea" stroke-width="0.9"/><polyline points="720,718 766,704.5 1040,720.5" fill="none" stroke="#eaeaea" stroke-width="0.9"/><polyline points="721.5,749.5 768,736 1040,752" fill="none" stroke="#eaeaea" stroke-width="0.9"/><polyline points="723,781 770,767.5 1040,783.5" fill="none" stroke="#eaeaea" stroke-width="0.9"/><path d="M716.5 654L723 781M762 640.5L770 767.5M723 781L1011 819M1011 819L1040 783.5" stroke="#eaeaea" stroke-width="0.9" fill="none"/><polygon points="731.9,654.3 751.1,648.8 1029.8,732.2 1026.7,794.5 1019.5,806.9 737.2,773.4" fill="#f8cbad" fill-opacity="0.85"/><polygon points="731.9,654.3 751.1,648.8 1029.8,732.2 1020.7,742.2" fill="#e2b9a0" fill-opacity="0.8"/><polygon points="737.2,773.4 755.2,763.8 1026.7,794.5 1019.5,806.9" fill="#f5c3a2" fill-opacity="0.6"/><polygon points="1020.7,742.2 1029.8,732.2 1026.7,794.5 1019.5,806.9" fill="#e0bba6" fill-opacity="0.7"/><polyline points="751.1,648.8 755.2,763.8 1026.7,794.5" fill="none" stroke="#ee8844" stroke-width="1" stroke-opacity="0.8"/><polygon points="731.9,654.3 1020.7,742.2 1019.5,806.9 737.2,773.4" fill="none" stroke="#ee8844" stroke-width="1.1"/><polyline points="731.9,654.3 751.1,648.8 1029.8,732.2 1020.7,742.2" fill="none" stroke="#ee8844" stroke-width="1.1"/><polyline points="1029.8,732.2 1026.7,794.5 1019.5,806.9" fill="none" stroke="#ee8844" stroke-width="1" stroke-opacity="0.8"/><path d="M870.9 697.2L882.9 690M869.7 789.7L881.7 778.2" stroke="#ee8844" stroke-width="1"/></svg>
<div class="t" style="left:730.82px;top:707.63px;font-size:10px;line-height:10px;color:#595959;transform:scaleX(0.9344);transform-origin:center;">16.9%</div>
<div class="t" style="left:862.82px;top:735.63px;font-size:10px;line-height:10px;color:#595959;transform:scaleX(0.9344);transform-origin:center;">16.4%</div>
<div class="t" style="left:1010.62px;top:765.73px;font-size:10px;line-height:10px;color:#595959;transform:scaleX(0.9344);transform-origin:center;">16.0%</div>
<div class="t" style="left:705.96px;top:793.33px;font-size:10px;line-height:10px;color:#595959;transform:scaleX(0.9415);transform-origin:center;">Akdeniz</div>
<div class="t" style="left:850.10px;top:809.33px;font-size:10px;line-height:10px;color:#595959;transform:scaleX(0.8991);transform-origin:center;">Ege</div>
<div class="t" style="left:993.00px;top:830.53px;font-size:10px;line-height:10px;color:#595959;">Marmara</div>
</body></html>
